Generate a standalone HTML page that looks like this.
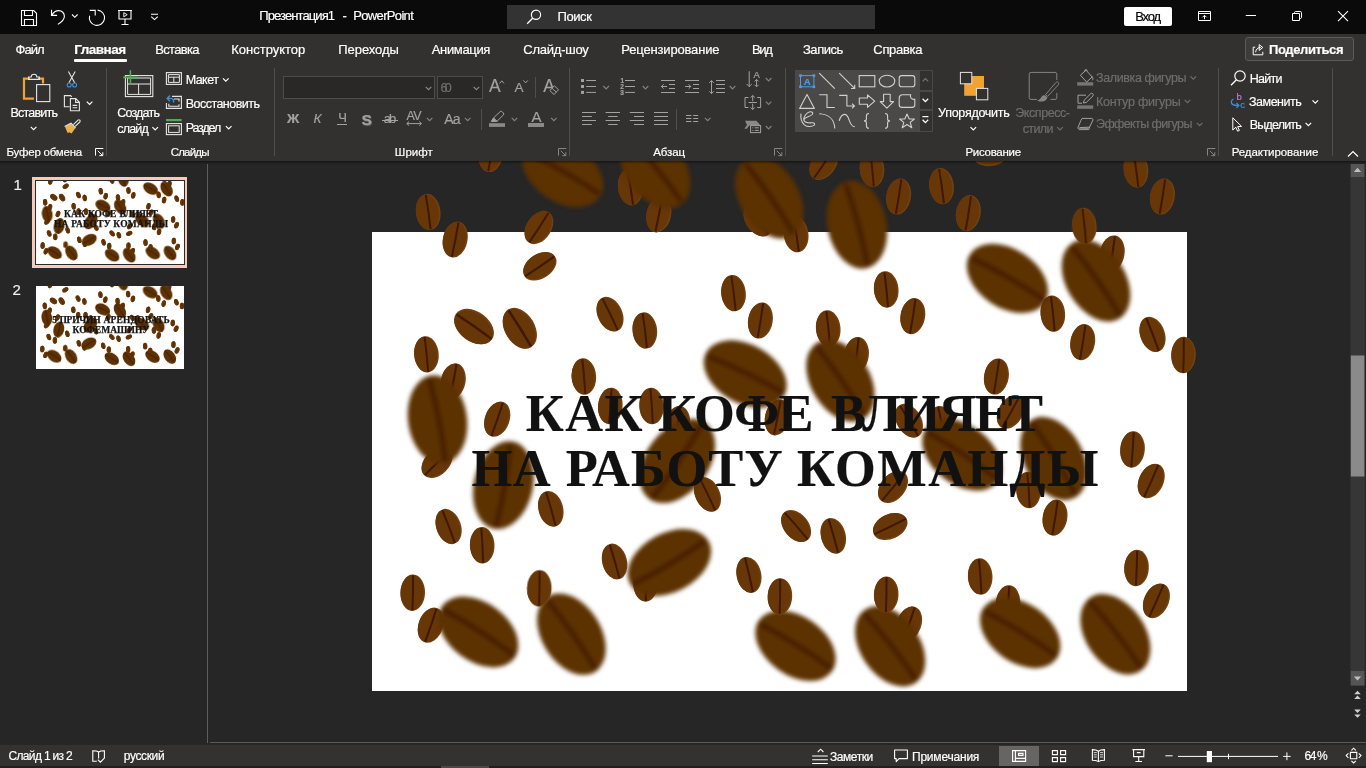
<!DOCTYPE html>
<html lang="ru">
<head>
<meta charset="utf-8">
<title>Презентация1 - PowerPoint</title>
<style>
*{box-sizing:border-box;margin:0;padding:0}
html,body{width:1366px;height:768px;overflow:hidden;background:#262626}
body{position:relative;font-family:"Liberation Sans",sans-serif;color:#fff;font-size:12px}
.abs{position:absolute}
.t{position:absolute;white-space:nowrap;line-height:1;color:#fff;-webkit-text-stroke:.18px currentColor}
.dim{color:#8a8886}
#titlebar{position:absolute;left:0;top:0;width:1366px;height:33.8px;background:#0a0a0a}
#search{position:absolute;left:507px;top:5px;width:368px;height:24px;background:#333333}
#signin{position:absolute;left:1124px;top:7px;width:48px;height:19px;background:#fff;border-radius:2px}
#ribbon{position:absolute;left:0;top:33px;width:1366px;height:127.5px;background:#323130}
#ribshadow{position:absolute;left:0;top:160.5px;width:1366px;height:3.5px;background:linear-gradient(rgba(0,0,0,.5),rgba(0,0,0,.2) 50%,rgba(0,0,0,0))}
#share{position:absolute;left:1245px;top:37px;width:109px;height:24px;background:#3d3c3b;border:1px solid #5c5b5a;border-radius:3px}
#tabline{position:absolute;left:74px;top:59px;width:53px;height:3px;background:#fff;border-radius:1px}
.vsep{position:absolute;width:1px;background:#4f4e4d}
#leftdiv{position:absolute;left:207px;top:164px;width:1px;height:579px;background:#5e5e5e}
#botline{position:absolute;left:210px;top:742px;width:1156px;height:1px;background:#5a5a5a}
#status{position:absolute;left:0;top:745px;width:1366px;height:21px;background:#333231}
#botstrip{position:absolute;left:0;top:766px;width:1366px;height:2px;background:#1f1f1f}
#stage{position:absolute;left:208px;top:161px;width:1140px;height:581px;overflow:hidden}
#slide{position:absolute;left:372px;top:232px;width:814.6px;height:459.4px;background:#fff}
svg{position:absolute;overflow:visible}
</style>
</head>
<body>
<div id="app" style="position:absolute;left:0;top:0;width:1366px;height:768px;will-change:transform">
<!-- stage -->
<div id="slide"></div>
<div id="leftdiv"></div>
<div id="botline"></div>
<div class="abs" style="left:208px;top:160px;width:1142px;height:582px;overflow:hidden"><svg style="left:-208px;top:-160px" width="1366" height="768" viewBox="0 0 1366 768"><defs><filter id="bl" x="-20%" y="-20%" width="140%" height="140%"><feGaussianBlur stdDeviation="1.900"/></filter></defs>
<g>
<g><g transform="translate(491.0 154.0) rotate(10)"><ellipse rx="12.3" ry="18.2" fill="#734110"/><ellipse cx="-0.7" rx="11.4" ry="17.6" fill="#673708"/><path d="M-.3 -17.300Q.5 0 .3 17.500" stroke="#411800" stroke-width="2" fill="none"/></g>
<g transform="translate(428.2 212.0) rotate(-7)"><ellipse rx="12.3" ry="18.2" fill="#734110"/><ellipse cx="-0.7" rx="11.4" ry="17.6" fill="#673708"/><path d="M-.3 -17.300Q.5 0 .3 17.500" stroke="#411800" stroke-width="2" fill="none"/></g>
<g transform="translate(455.2 239.5) rotate(12)"><ellipse rx="12.3" ry="18.2" fill="#734110"/><ellipse cx="-0.7" rx="11.4" ry="17.6" fill="#673708"/><path d="M-.3 -17.300Q.5 0 .3 17.500" stroke="#411800" stroke-width="2" fill="none"/></g>
<g transform="translate(538.9 227.5) rotate(34)"><ellipse rx="12.3" ry="18.2" fill="#734110"/><ellipse cx="-0.7" rx="11.4" ry="17.6" fill="#673708"/><path d="M-.3 -17.300Q.5 0 .3 17.500" stroke="#411800" stroke-width="2" fill="none"/></g>
<g transform="translate(539.8 266.3) rotate(57)"><ellipse rx="12.3" ry="18.2" fill="#734110"/><ellipse cx="-0.7" rx="11.4" ry="17.6" fill="#673708"/><path d="M-.3 -17.300Q.5 0 .3 17.500" stroke="#411800" stroke-width="2" fill="none"/></g>
<g transform="translate(630.3 187.3) rotate(-8)"><ellipse rx="12.3" ry="18.2" fill="#734110"/><ellipse cx="-0.7" rx="11.4" ry="17.6" fill="#673708"/><path d="M-.3 -17.300Q.5 0 .3 17.500" stroke="#411800" stroke-width="2" fill="none"/></g>
<g transform="translate(658.8 214.4) rotate(12)"><ellipse rx="12.3" ry="18.2" fill="#734110"/><ellipse cx="-0.7" rx="11.4" ry="17.6" fill="#673708"/><path d="M-.3 -17.300Q.5 0 .3 17.500" stroke="#411800" stroke-width="2" fill="none"/></g>
<g transform="translate(796.1 234.2) rotate(-8)"><ellipse rx="12.3" ry="18.2" fill="#734110"/><ellipse cx="-0.7" rx="11.4" ry="17.6" fill="#673708"/><path d="M-.3 -17.300Q.5 0 .3 17.500" stroke="#411800" stroke-width="2" fill="none"/></g>
<g transform="translate(758.0 220.0) rotate(-35)"><ellipse rx="12.3" ry="18.2" fill="#734110"/><ellipse cx="-0.7" rx="11.4" ry="17.6" fill="#673708"/><path d="M-.3 -17.300Q.5 0 .3 17.500" stroke="#411800" stroke-width="2" fill="none"/></g>
<g transform="translate(823.8 163.5) rotate(35)"><ellipse rx="12.3" ry="18.2" fill="#734110"/><ellipse cx="-0.7" rx="11.4" ry="17.6" fill="#673708"/><path d="M-.3 -17.300Q.5 0 .3 17.500" stroke="#411800" stroke-width="2" fill="none"/></g>
<g transform="translate(872.0 169.0) rotate(-5)"><ellipse rx="12.3" ry="18.2" fill="#734110"/><ellipse cx="-0.7" rx="11.4" ry="17.6" fill="#673708"/><path d="M-.3 -17.300Q.5 0 .3 17.500" stroke="#411800" stroke-width="2" fill="none"/></g>
<g transform="translate(898.6 196.5) rotate(10)"><ellipse rx="12.3" ry="18.2" fill="#734110"/><ellipse cx="-0.7" rx="11.4" ry="17.6" fill="#673708"/><path d="M-.3 -17.300Q.5 0 .3 17.500" stroke="#411800" stroke-width="2" fill="none"/></g>
<g transform="translate(941.5 186.1) rotate(-7)"><ellipse rx="12.3" ry="18.2" fill="#734110"/><ellipse cx="-0.7" rx="11.4" ry="17.6" fill="#673708"/><path d="M-.3 -17.300Q.5 0 .3 17.500" stroke="#411800" stroke-width="2" fill="none"/></g>
<g transform="translate(968.3 213.1) rotate(10)"><ellipse rx="12.3" ry="18.2" fill="#734110"/><ellipse cx="-0.7" rx="11.4" ry="17.6" fill="#673708"/><path d="M-.3 -17.300Q.5 0 .3 17.500" stroke="#411800" stroke-width="2" fill="none"/></g>
<g transform="translate(991.0 153.7) rotate(80)"><ellipse rx="12.3" ry="18.2" fill="#734110"/><ellipse cx="-0.7" rx="11.4" ry="17.6" fill="#673708"/><path d="M-.3 -17.300Q.5 0 .3 17.500" stroke="#411800" stroke-width="2" fill="none"/></g>
<g transform="translate(1135.9 169.5) rotate(-7)"><ellipse rx="12.3" ry="18.2" fill="#734110"/><ellipse cx="-0.7" rx="11.4" ry="17.6" fill="#673708"/><path d="M-.3 -17.300Q.5 0 .3 17.500" stroke="#411800" stroke-width="2" fill="none"/></g>
<g transform="translate(1162.4 196.5) rotate(10)"><ellipse rx="12.3" ry="18.2" fill="#734110"/><ellipse cx="-0.7" rx="11.4" ry="17.6" fill="#673708"/><path d="M-.3 -17.300Q.5 0 .3 17.500" stroke="#411800" stroke-width="2" fill="none"/></g>
<g transform="translate(1112.2 253.5) rotate(10)"><ellipse rx="12.3" ry="18.2" fill="#734110"/><ellipse cx="-0.7" rx="11.4" ry="17.6" fill="#673708"/><path d="M-.3 -17.300Q.5 0 .3 17.500" stroke="#411800" stroke-width="2" fill="none"/></g>
<g transform="translate(474.0 326.6) rotate(-54) scale(1.215)"><ellipse rx="12.3" ry="18.2" fill="#734110"/><ellipse cx="-0.7" rx="11.4" ry="17.6" fill="#673708"/><path d="M-.3 -17.300Q.5 0 .3 17.500" stroke="#411800" stroke-width="2" fill="none"/></g>
<g transform="translate(519.8 328.3) rotate(-31) scale(1.215)"><ellipse rx="12.3" ry="18.2" fill="#734110"/><ellipse cx="-0.7" rx="11.4" ry="17.6" fill="#673708"/><path d="M-.3 -17.300Q.5 0 .3 17.500" stroke="#411800" stroke-width="2" fill="none"/></g>
<g transform="translate(610.0 314.2) rotate(-25)"><ellipse rx="12.3" ry="18.2" fill="#734110"/><ellipse cx="-0.7" rx="11.4" ry="17.6" fill="#673708"/><path d="M-.3 -17.300Q.5 0 .3 17.500" stroke="#411800" stroke-width="2" fill="none"/></g>
<g transform="translate(644.8 330.5) rotate(-6)"><ellipse rx="12.3" ry="18.2" fill="#734110"/><ellipse cx="-0.7" rx="11.4" ry="17.6" fill="#673708"/><path d="M-.3 -17.300Q.5 0 .3 17.500" stroke="#411800" stroke-width="2" fill="none"/></g>
<g transform="translate(733.5 293.2) rotate(-6)"><ellipse rx="12.3" ry="18.2" fill="#734110"/><ellipse cx="-0.7" rx="11.4" ry="17.6" fill="#673708"/><path d="M-.3 -17.300Q.5 0 .3 17.500" stroke="#411800" stroke-width="2" fill="none"/></g>
<g transform="translate(760.4 320.5) rotate(10)"><ellipse rx="12.3" ry="18.2" fill="#734110"/><ellipse cx="-0.7" rx="11.4" ry="17.6" fill="#673708"/><path d="M-.3 -17.300Q.5 0 .3 17.500" stroke="#411800" stroke-width="2" fill="none"/></g>
<g transform="translate(828.2 328.5) rotate(-5)"><ellipse rx="12.3" ry="18.2" fill="#734110"/><ellipse cx="-0.7" rx="11.4" ry="17.6" fill="#673708"/><path d="M-.3 -17.300Q.5 0 .3 17.500" stroke="#411800" stroke-width="2" fill="none"/></g>
<g transform="translate(886.2 289.5) rotate(-5)"><ellipse rx="12.3" ry="18.2" fill="#734110"/><ellipse cx="-0.7" rx="11.4" ry="17.6" fill="#673708"/><path d="M-.3 -17.300Q.5 0 .3 17.500" stroke="#411800" stroke-width="2" fill="none"/></g>
<g transform="translate(912.8 316.1) rotate(10)"><ellipse rx="12.3" ry="18.2" fill="#734110"/><ellipse cx="-0.7" rx="11.4" ry="17.6" fill="#673708"/><path d="M-.3 -17.300Q.5 0 .3 17.500" stroke="#411800" stroke-width="2" fill="none"/></g>
<g transform="translate(1052.8 313.7) rotate(-5)"><ellipse rx="12.3" ry="18.2" fill="#734110"/><ellipse cx="-0.7" rx="11.4" ry="17.6" fill="#673708"/><path d="M-.3 -17.300Q.5 0 .3 17.500" stroke="#411800" stroke-width="2" fill="none"/></g>
<g transform="translate(1082.7 342.1) rotate(10)"><ellipse rx="12.3" ry="18.2" fill="#734110"/><ellipse cx="-0.7" rx="11.4" ry="17.6" fill="#673708"/><path d="M-.3 -17.300Q.5 0 .3 17.500" stroke="#411800" stroke-width="2" fill="none"/></g>
<g transform="translate(1152.5 334.4) rotate(-20)"><ellipse rx="12.3" ry="18.2" fill="#734110"/><ellipse cx="-0.7" rx="11.4" ry="17.6" fill="#673708"/><path d="M-.3 -17.300Q.5 0 .3 17.500" stroke="#411800" stroke-width="2" fill="none"/></g>
<g transform="translate(1183.5 355.0) rotate(2)"><ellipse rx="12.3" ry="18.2" fill="#734110"/><ellipse cx="-0.7" rx="11.4" ry="17.6" fill="#673708"/><path d="M-.3 -17.300Q.5 0 .3 17.500" stroke="#411800" stroke-width="2" fill="none"/></g>
<g transform="translate(426.4 354.3) rotate(-5)"><ellipse rx="12.3" ry="18.2" fill="#734110"/><ellipse cx="-0.7" rx="11.4" ry="17.6" fill="#673708"/><path d="M-.3 -17.300Q.5 0 .3 17.500" stroke="#411800" stroke-width="2" fill="none"/></g>
<g transform="translate(453.2 381.2) rotate(12)"><ellipse rx="12.3" ry="18.2" fill="#734110"/><ellipse cx="-0.7" rx="11.4" ry="17.6" fill="#673708"/><path d="M-.3 -17.300Q.5 0 .3 17.500" stroke="#411800" stroke-width="2" fill="none"/></g>
<g transform="translate(437.0 462.5) rotate(45)"><ellipse rx="12.3" ry="18.2" fill="#734110"/><ellipse cx="-0.7" rx="11.4" ry="17.6" fill="#673708"/><path d="M-.3 -17.300Q.5 0 .3 17.500" stroke="#411800" stroke-width="2" fill="none"/></g>
<g transform="translate(497.2 419.2) rotate(20)"><ellipse rx="12.3" ry="18.2" fill="#734110"/><ellipse cx="-0.7" rx="11.4" ry="17.6" fill="#673708"/><path d="M-.3 -17.300Q.5 0 .3 17.500" stroke="#411800" stroke-width="2" fill="none"/></g>
<g transform="translate(583.8 376.5) rotate(-4)"><ellipse rx="12.3" ry="18.2" fill="#734110"/><ellipse cx="-0.7" rx="11.4" ry="17.6" fill="#673708"/><path d="M-.3 -17.300Q.5 0 .3 17.500" stroke="#411800" stroke-width="2" fill="none"/></g>
<g transform="translate(610.3 406.0) rotate(5)"><ellipse rx="12.3" ry="18.2" fill="#734110"/><ellipse cx="-0.7" rx="11.4" ry="17.6" fill="#673708"/><path d="M-.3 -17.300Q.5 0 .3 17.500" stroke="#411800" stroke-width="2" fill="none"/></g>
<g transform="translate(651.6 406.0) rotate(-3)"><ellipse rx="12.3" ry="18.2" fill="#734110"/><ellipse cx="-0.7" rx="11.4" ry="17.6" fill="#673708"/><path d="M-.3 -17.300Q.5 0 .3 17.500" stroke="#411800" stroke-width="2" fill="none"/></g>
<g transform="translate(677.6 424.0) rotate(10)"><ellipse rx="12.3" ry="18.2" fill="#734110"/><ellipse cx="-0.7" rx="11.4" ry="17.6" fill="#673708"/><path d="M-.3 -17.300Q.5 0 .3 17.500" stroke="#411800" stroke-width="2" fill="none"/></g>
<g transform="translate(777.3 417.4) rotate(12)"><ellipse rx="12.3" ry="18.2" fill="#734110"/><ellipse cx="-0.7" rx="11.4" ry="17.6" fill="#673708"/><path d="M-.3 -17.300Q.5 0 .3 17.500" stroke="#411800" stroke-width="2" fill="none"/></g>
<g transform="translate(856.5 355.0) rotate(8)"><ellipse rx="12.3" ry="18.2" fill="#734110"/><ellipse cx="-0.7" rx="11.4" ry="17.6" fill="#673708"/><path d="M-.3 -17.300Q.5 0 .3 17.500" stroke="#411800" stroke-width="2" fill="none"/></g>
<g transform="translate(909.0 420.7) rotate(-30)"><ellipse rx="12.3" ry="18.2" fill="#734110"/><ellipse cx="-0.7" rx="11.4" ry="17.6" fill="#673708"/><path d="M-.3 -17.300Q.5 0 .3 17.500" stroke="#411800" stroke-width="2" fill="none"/></g>
<g transform="translate(941.5 424.0) rotate(-10)"><ellipse rx="12.3" ry="18.2" fill="#734110"/><ellipse cx="-0.7" rx="11.4" ry="17.6" fill="#673708"/><path d="M-.3 -17.300Q.5 0 .3 17.500" stroke="#411800" stroke-width="2" fill="none"/></g>
<g transform="translate(996.4 376.5) rotate(10)"><ellipse rx="12.3" ry="18.2" fill="#734110"/><ellipse cx="-0.7" rx="11.4" ry="17.6" fill="#673708"/><path d="M-.3 -17.300Q.5 0 .3 17.500" stroke="#411800" stroke-width="2" fill="none"/></g>
<g transform="translate(1010.8 411.9) rotate(30)"><ellipse rx="12.3" ry="18.2" fill="#734110"/><ellipse cx="-0.7" rx="11.4" ry="17.6" fill="#673708"/><path d="M-.3 -17.300Q.5 0 .3 17.500" stroke="#411800" stroke-width="2" fill="none"/></g>
<g transform="translate(1132.5 449.5) rotate(5)"><ellipse rx="12.3" ry="18.2" fill="#734110"/><ellipse cx="-0.7" rx="11.4" ry="17.6" fill="#673708"/><path d="M-.3 -17.300Q.5 0 .3 17.500" stroke="#411800" stroke-width="2" fill="none"/></g>
<g transform="translate(1151.2 481.0) rotate(25)"><ellipse rx="12.3" ry="18.2" fill="#734110"/><ellipse cx="-0.7" rx="11.4" ry="17.6" fill="#673708"/><path d="M-.3 -17.300Q.5 0 .3 17.500" stroke="#411800" stroke-width="2" fill="none"/></g>
<g transform="translate(1028.5 490.0) rotate(-3)"><ellipse rx="12.3" ry="18.2" fill="#734110"/><ellipse cx="-0.7" rx="11.4" ry="17.6" fill="#673708"/><path d="M-.3 -17.300Q.5 0 .3 17.500" stroke="#411800" stroke-width="2" fill="none"/></g>
<g transform="translate(1055.0 517.6) rotate(10)"><ellipse rx="12.3" ry="18.2" fill="#734110"/><ellipse cx="-0.7" rx="11.4" ry="17.6" fill="#673708"/><path d="M-.3 -17.300Q.5 0 .3 17.500" stroke="#411800" stroke-width="2" fill="none"/></g>
<g transform="translate(893.0 487.0) rotate(40)"><ellipse rx="12.3" ry="18.2" fill="#734110"/><ellipse cx="-0.7" rx="11.4" ry="17.6" fill="#673708"/><path d="M-.3 -17.300Q.5 0 .3 17.500" stroke="#411800" stroke-width="2" fill="none"/></g>
<g transform="translate(550.8 508.8) rotate(-15)"><ellipse rx="12.3" ry="18.2" fill="#734110"/><ellipse cx="-0.7" rx="11.4" ry="17.6" fill="#673708"/><path d="M-.3 -17.300Q.5 0 .3 17.500" stroke="#411800" stroke-width="2" fill="none"/></g>
<g transform="translate(448.6 526.5) rotate(-20)"><ellipse rx="12.3" ry="18.2" fill="#734110"/><ellipse cx="-0.7" rx="11.4" ry="17.6" fill="#673708"/><path d="M-.3 -17.300Q.5 0 .3 17.500" stroke="#411800" stroke-width="2" fill="none"/></g>
<g transform="translate(482.2 545.3) rotate(-2)"><ellipse rx="12.3" ry="18.2" fill="#734110"/><ellipse cx="-0.7" rx="11.4" ry="17.6" fill="#673708"/><path d="M-.3 -17.300Q.5 0 .3 17.500" stroke="#411800" stroke-width="2" fill="none"/></g>
<g transform="translate(707.5 494.4) rotate(-25)"><ellipse rx="12.3" ry="18.2" fill="#734110"/><ellipse cx="-0.7" rx="11.4" ry="17.6" fill="#673708"/><path d="M-.3 -17.300Q.5 0 .3 17.500" stroke="#411800" stroke-width="2" fill="none"/></g>
<g transform="translate(796.1 526.0) rotate(-40)"><ellipse rx="12.3" ry="18.2" fill="#734110"/><ellipse cx="-0.7" rx="11.4" ry="17.6" fill="#673708"/><path d="M-.3 -17.300Q.5 0 .3 17.500" stroke="#411800" stroke-width="2" fill="none"/></g>
<g transform="translate(833.3 535.8) rotate(-15)"><ellipse rx="12.3" ry="18.2" fill="#734110"/><ellipse cx="-0.7" rx="11.4" ry="17.6" fill="#673708"/><path d="M-.3 -17.300Q.5 0 .3 17.500" stroke="#411800" stroke-width="2" fill="none"/></g>
<g transform="translate(890.2 526.5) rotate(65)"><ellipse rx="12.3" ry="18.2" fill="#734110"/><ellipse cx="-0.7" rx="11.4" ry="17.6" fill="#673708"/><path d="M-.3 -17.300Q.5 0 .3 17.500" stroke="#411800" stroke-width="2" fill="none"/></g>
<g transform="translate(412.7 592.7) rotate(2)"><ellipse rx="12.3" ry="18.2" fill="#734110"/><ellipse cx="-0.7" rx="11.4" ry="17.6" fill="#673708"/><path d="M-.3 -17.300Q.5 0 .3 17.500" stroke="#411800" stroke-width="2" fill="none"/></g>
<g transform="translate(430.8 625.2) rotate(20)"><ellipse rx="12.3" ry="18.2" fill="#734110"/><ellipse cx="-0.7" rx="11.4" ry="17.6" fill="#673708"/><path d="M-.3 -17.300Q.5 0 .3 17.500" stroke="#411800" stroke-width="2" fill="none"/></g>
<g transform="translate(614.6 561.5) rotate(-15)"><ellipse rx="12.3" ry="18.2" fill="#734110"/><ellipse cx="-0.7" rx="11.4" ry="17.6" fill="#673708"/><path d="M-.3 -17.300Q.5 0 .3 17.500" stroke="#411800" stroke-width="2" fill="none"/></g>
<g transform="translate(645.6 583.5) rotate(0)"><ellipse rx="12.3" ry="18.2" fill="#734110"/><ellipse cx="-0.7" rx="11.4" ry="17.6" fill="#673708"/><path d="M-.3 -17.300Q.5 0 .3 17.500" stroke="#411800" stroke-width="2" fill="none"/></g>
<g transform="translate(748.9 574.9) rotate(-12)"><ellipse rx="12.3" ry="18.2" fill="#734110"/><ellipse cx="-0.7" rx="11.4" ry="17.6" fill="#673708"/><path d="M-.3 -17.300Q.5 0 .3 17.500" stroke="#411800" stroke-width="2" fill="none"/></g>
<g transform="translate(909.0 624.0) rotate(20)"><ellipse rx="12.3" ry="18.2" fill="#734110"/><ellipse cx="-0.7" rx="11.4" ry="17.6" fill="#673708"/><path d="M-.3 -17.300Q.5 0 .3 17.500" stroke="#411800" stroke-width="2" fill="none"/></g>
<g transform="translate(980.2 576.5) rotate(-3)"><ellipse rx="12.3" ry="18.2" fill="#734110"/><ellipse cx="-0.7" rx="11.4" ry="17.6" fill="#673708"/><path d="M-.3 -17.300Q.5 0 .3 17.500" stroke="#411800" stroke-width="2" fill="none"/></g>
<g transform="translate(1008.0 603.5) rotate(5)"><ellipse rx="12.3" ry="18.2" fill="#734110"/><ellipse cx="-0.7" rx="11.4" ry="17.6" fill="#673708"/><path d="M-.3 -17.300Q.5 0 .3 17.500" stroke="#411800" stroke-width="2" fill="none"/></g>
<g transform="translate(1136.5 568.0) rotate(3)"><ellipse rx="12.3" ry="18.2" fill="#734110"/><ellipse cx="-0.7" rx="11.4" ry="17.6" fill="#673708"/><path d="M-.3 -17.300Q.5 0 .3 17.500" stroke="#411800" stroke-width="2" fill="none"/></g>
<g transform="translate(1156.4 600.8) rotate(25)"><ellipse rx="12.3" ry="18.2" fill="#734110"/><ellipse cx="-0.7" rx="11.4" ry="17.6" fill="#673708"/><path d="M-.3 -17.300Q.5 0 .3 17.500" stroke="#411800" stroke-width="2" fill="none"/></g></g>
<g filter="url(#bl)"><g transform="translate(562.6 172.5) rotate(-57)"><ellipse rx="29.500" ry="44.500" fill="#5c3000"/><path d="M-2.500 -41.500Q3 0 2 42.500" stroke="#451d00" stroke-width="4.600" fill="none"/></g>
<g transform="translate(655.0 168.5) rotate(-36)"><ellipse rx="29.500" ry="44.500" fill="#5c3000"/><path d="M-2.500 -41.500Q3 0 2 42.500" stroke="#451d00" stroke-width="4.600" fill="none"/></g>
<g transform="translate(769.2 197.6) rotate(-31.5)"><ellipse rx="29.500" ry="44.500" fill="#5c3000"/><path d="M-2.500 -41.500Q3 0 2 42.500" stroke="#451d00" stroke-width="4.600" fill="none"/></g>
<g transform="translate(856.9 224.7) rotate(-12)"><ellipse rx="29.500" ry="44.500" fill="#5c3000"/><path d="M-2.500 -41.500Q3 0 2 42.500" stroke="#451d00" stroke-width="4.600" fill="none"/></g>
<g transform="translate(1007.4 278.4) rotate(-57)"><ellipse rx="29.500" ry="44.500" fill="#5c3000"/><path d="M-2.500 -41.500Q3 0 2 42.500" stroke="#451d00" stroke-width="4.600" fill="none"/></g>
<g transform="translate(1096.0 280.7) rotate(-32)"><ellipse rx="29.500" ry="44.500" fill="#5c3000"/><path d="M-2.500 -41.500Q3 0 2 42.500" stroke="#451d00" stroke-width="4.600" fill="none"/></g>
<g transform="translate(437.5 419.6) rotate(-8)"><ellipse rx="29.500" ry="44.500" fill="#5c3000"/><path d="M-2.500 -41.500Q3 0 2 42.500" stroke="#451d00" stroke-width="4.600" fill="none"/></g>
<g transform="translate(745.2 374.0) rotate(-61)"><ellipse rx="29.500" ry="44.500" fill="#5c3000"/><path d="M-2.500 -41.500Q3 0 2 42.500" stroke="#451d00" stroke-width="4.600" fill="none"/></g>
<g transform="translate(840.4 380.7) rotate(-31.5)"><ellipse rx="29.500" ry="44.500" fill="#5c3000"/><path d="M-2.500 -41.500Q3 0 2 42.500" stroke="#451d00" stroke-width="4.600" fill="none"/></g>
<g transform="translate(503.4 485.2) rotate(13)"><ellipse rx="29.500" ry="44.500" fill="#5c3000"/><path d="M-2.500 -41.500Q3 0 2 42.500" stroke="#451d00" stroke-width="4.600" fill="none"/></g>
<g transform="translate(677.4 461.0) rotate(37) scale(1.06)"><ellipse rx="29.500" ry="44.500" fill="#5c3000"/><path d="M-2.500 -41.500Q3 0 2 42.500" stroke="#451d00" stroke-width="4.600" fill="none"/></g>
<g transform="translate(961.9 454.9) rotate(-53)"><ellipse rx="29.500" ry="44.500" fill="#5c3000"/><path d="M-2.500 -41.500Q3 0 2 42.500" stroke="#451d00" stroke-width="4.600" fill="none"/></g>
<g transform="translate(1053.7 458.5) rotate(-28)"><ellipse rx="29.500" ry="44.500" fill="#5c3000"/><path d="M-2.500 -41.500Q3 0 2 42.500" stroke="#451d00" stroke-width="4.600" fill="none"/></g>
<g transform="translate(669.4 562.5) rotate(62)"><ellipse rx="29.500" ry="44.500" fill="#5c3000"/><path d="M-2.500 -41.500Q3 0 2 42.500" stroke="#451d00" stroke-width="4.600" fill="none"/></g>
<g transform="translate(478.4 632.0) rotate(-54)"><ellipse rx="29.500" ry="44.500" fill="#5c3000"/><path d="M-2.500 -41.500Q3 0 2 42.500" stroke="#451d00" stroke-width="4.600" fill="none"/></g>
<g transform="translate(571.4 634.2) rotate(-32)"><ellipse rx="29.500" ry="44.500" fill="#5c3000"/><path d="M-2.500 -41.500Q3 0 2 42.500" stroke="#451d00" stroke-width="4.600" fill="none"/></g>
<g transform="translate(795.5 645.8) rotate(-55)"><ellipse rx="29.500" ry="44.500" fill="#5c3000"/><path d="M-2.500 -41.500Q3 0 2 42.500" stroke="#451d00" stroke-width="4.600" fill="none"/></g>
<g transform="translate(890.2 646.3) rotate(-35)"><ellipse rx="29.500" ry="44.500" fill="#5c3000"/><path d="M-2.500 -41.500Q3 0 2 42.500" stroke="#451d00" stroke-width="4.600" fill="none"/></g>
<g transform="translate(1020.2 633.0) rotate(-55)"><ellipse rx="29.500" ry="44.500" fill="#5c3000"/><path d="M-2.500 -41.500Q3 0 2 42.500" stroke="#451d00" stroke-width="4.600" fill="none"/></g>
<g transform="translate(1115.4 634.2) rotate(-34.6)"><ellipse rx="29.500" ry="44.500" fill="#5c3000"/><path d="M-2.500 -41.500Q3 0 2 42.500" stroke="#451d00" stroke-width="4.600" fill="none"/></g></g>
<g><g transform="translate(1084.3 226.0) rotate(-5)"><ellipse rx="12.3" ry="18.2" fill="#734110"/><ellipse cx="-0.7" rx="11.4" ry="17.6" fill="#673708"/><path d="M-.3 -17.300Q.5 0 .3 17.500" stroke="#411800" stroke-width="2" fill="none"/></g>
<g transform="translate(539.3 588.4) rotate(2)"><ellipse rx="12.3" ry="18.2" fill="#734110"/><ellipse cx="-0.7" rx="11.4" ry="17.6" fill="#673708"/><path d="M-.3 -17.300Q.5 0 .3 17.500" stroke="#411800" stroke-width="2" fill="none"/></g>
<g transform="translate(779.9 596.4) rotate(2)"><ellipse rx="12.3" ry="18.2" fill="#734110"/><ellipse cx="-0.7" rx="11.4" ry="17.6" fill="#673708"/><path d="M-.3 -17.300Q.5 0 .3 17.500" stroke="#411800" stroke-width="2" fill="none"/></g>
<g transform="translate(886.2 594.6) rotate(2)"><ellipse rx="12.3" ry="18.2" fill="#734110"/><ellipse cx="-0.7" rx="11.4" ry="17.6" fill="#673708"/><path d="M-.3 -17.300Q.5 0 .3 17.500" stroke="#411800" stroke-width="2" fill="none"/></g></g>
</g>
</svg></div>
<span class="t" style="left:525.70px;top:384px;line-height:58px;font-size:52.4px;letter-spacing:1.475px;color:#111;font-weight:bold;font-family:'Liberation Serif',serif;">КАК</span>
<span class="t" style="left:658.10px;top:384px;line-height:58px;font-size:52.4px;letter-spacing:-0.900px;color:#111;font-weight:bold;font-family:'Liberation Serif',serif;">КОФЕ</span>
<span class="t" style="left:830.90px;top:384px;line-height:58px;font-size:52.4px;letter-spacing:-1.695px;color:#111;font-weight:bold;font-family:'Liberation Serif',serif;">ВЛИЯЕТ</span>
<span class="t" style="left:471.60px;top:439px;line-height:58px;font-size:52.4px;letter-spacing:0.438px;color:#111;font-weight:bold;font-family:'Liberation Serif',serif;">НА</span>
<span class="t" style="left:565.70px;top:439px;line-height:58px;font-size:52.4px;letter-spacing:1.100px;color:#111;font-weight:bold;font-family:'Liberation Serif',serif;">РАБОТУ</span>
<span class="t" style="left:797.00px;top:439px;line-height:58px;font-size:52.4px;letter-spacing:1.421px;color:#111;font-weight:bold;font-family:'Liberation Serif',serif;">КОМАНДЫ</span>
<!-- chrome -->
<div id="ribbon"></div>
<div id="ribshadow"></div>
<div id="share"></div>
<div id="tabline"></div>
<div id="titlebar"></div>
<div id="search"></div>
<div id="signin"></div>
<span class="t" style="left:259.30px;top:8px;line-height:15px;font-size:13px;letter-spacing:-0.914px;">Презентация1</span>
<span class="t" style="left:342.50px;top:8px;line-height:15px;font-size:13px;letter-spacing:0.000px;">-</span>
<span class="t" style="left:353.30px;top:8px;line-height:15px;font-size:13px;letter-spacing:-0.667px;">PowerPoint</span>
<span class="t" style="left:557.50px;top:9px;line-height:15px;font-size:13px;letter-spacing:-0.406px;">Поиск</span>
<span class="t" style="left:1135.30px;top:9px;line-height:15px;font-size:13px;letter-spacing:-1.246px;color:#000;">Вход</span>
<span class="t" style="left:15.50px;top:42px;line-height:15px;font-size:13px;letter-spacing:-0.979px;">Файл</span>
<span class="t" style="left:74.30px;top:42px;line-height:15px;font-size:13.5px;letter-spacing:-0.529px;font-weight:bold;">Главная</span>
<span class="t" style="left:155.30px;top:42px;line-height:15px;font-size:13px;letter-spacing:-0.685px;">Вставка</span>
<span class="t" style="left:231.30px;top:42px;line-height:15px;font-size:13px;letter-spacing:-0.013px;">Конструктор</span>
<span class="t" style="left:338.30px;top:42px;line-height:15px;font-size:13px;letter-spacing:-0.071px;">Переходы</span>
<span class="t" style="left:431.80px;top:42px;line-height:15px;font-size:13px;letter-spacing:-0.357px;">Анимация</span>
<span class="t" style="left:523.30px;top:42px;line-height:15px;font-size:13px;letter-spacing:-0.234px;">Слайд-шоу</span>
<span class="t" style="left:621.30px;top:42px;line-height:15px;font-size:13px;letter-spacing:-0.167px;">Рецензирование</span>
<span class="t" style="left:752.00px;top:42px;line-height:15px;font-size:13px;letter-spacing:-1.350px;">Вид</span>
<span class="t" style="left:803.00px;top:42px;line-height:15px;font-size:13px;letter-spacing:-0.478px;">Запись</span>
<span class="t" style="left:873.30px;top:42px;line-height:15px;font-size:13px;letter-spacing:-0.300px;">Справка</span>
<span class="t" style="left:1269.00px;top:42px;line-height:15px;font-size:13px;letter-spacing:-0.389px;font-weight:bold;">Поделиться</span>
<svg style="left:20px;top:9px" width="18" height="18" viewBox="0 0 18 18"><path d="M1.5 1.5h12.2l2.8 2.8v12.2h-15z M4.5 1.5v5h8v-5 M4.5 16.5v-6h9v6" stroke="#fff" fill="none" stroke-width="1.1"/></svg>
<svg style="left:50px;top:8px" width="18" height="18" viewBox="0 0 18 18"><path d="M1.5 1.8v5.6h5.6 M1.8 7.2c1.6-3 4-4.6 7-4.6a5.6 5.6 0 0 1 5.6 5.6c0 3.6-3 6-6.6 8.2" stroke="#fff" fill="none" stroke-width="1.1"/></svg>
<svg style="left:71px;top:13px" width="8" height="6" viewBox="0 0 8 6"><path d="M1 1.5l2.8 2.8l2.8-2.8" stroke="#fff" fill="none" stroke-width="1.1"/></svg>
<svg style="left:88px;top:8px" width="18" height="19" viewBox="0 0 18 19"><path d="M1.8 2.4h5.400v5.200 M9.600 2.150a7.600 7.600 0 1 1-8 5.600" stroke="#fff" fill="none" stroke-width="1.1"/></svg>
<svg style="left:117px;top:9px" width="16" height="17" viewBox="0 0 16 17"><path d="M1 1.5h14 M2 1.5v8.5h12v-8.5 M8 10v5.5 M4.5 15.5h7" stroke="#fff" fill="none" stroke-width="1.1"/><path d="M6.800 3.600l3.400 2.100l-3.400 2.100z" stroke="#fff" stroke-width=".9" fill="none"/></svg>
<svg style="left:150px;top:13px" width="9" height="8" viewBox="0 0 9 8"><path d="M1 1.2h7 M1.2 3.6l3.3 3l3.3-3" stroke="#fff" fill="none" stroke-width="1.1"/></svg>
<svg style="left:526px;top:9px" width="16" height="16" viewBox="0 0 16 16"><circle cx="10" cy="5.8" r="4.6" stroke="#fff" fill="none" stroke-width="1.2"/><path d="M6.6 9.2l-5.4 5.6" stroke="#fff" fill="none" stroke-width="1.3"/></svg>
<svg style="left:1197px;top:10px" width="15" height="12" viewBox="0 0 15 12"><path d="M1.500 1.500h12v9h-12z M1.500 3.500h12 M7.500 9.200v-3.600 M5.500 7.300l2-2l2 2" stroke="#fff" fill="none" stroke-width="1"/></svg>
<svg style="left:1245px;top:15px" width="12" height="2" viewBox="0 0 12 2"><path d="M0.800 .500h10.200" stroke="#fff" fill="none" stroke-width="1"/></svg>
<svg style="left:1291px;top:10px" width="12" height="12" viewBox="0 0 12 12"><path d="M1.500 3.500h7v7h-7z M3.500 3.300v-.6a1.200 1.200 0 0 1 1.200-1.200h4.600a1.200 1.200 0 0 1 1.200 1.200v4.600a1.200 1.200 0 0 1-1.200 1.200h-.6" stroke="#fff" fill="none" stroke-width="1"/></svg>
<svg style="left:1337px;top:10px" width="12" height="12" viewBox="0 0 12 12"><path d="M1 1.200l10 10 M11 1.200l-10 10" stroke="#fff" fill="none" stroke-width="1.100"/></svg>
<svg style="left:1252px;top:43px" width="13" height="13" viewBox="0 0 13 13"><path d="M3.2 4.2h-2v7.6h9.6v-3 M3.6 9.2c.4-3 2.2-4.8 5.2-4.8 M7.2 1.6l3.6 2.9l-3.6 2.9z" stroke="#fff" fill="none" stroke-width="1"/></svg>
<!-- ribbon -->
<div class="vsep" style="left:106px;top:68px;height:88px;background:#4f4e4d"></div>
<div class="vsep" style="left:274px;top:68px;height:88px;background:#4f4e4d"></div>
<div class="vsep" style="left:569px;top:68px;height:88px;background:#4f4e4d"></div>
<div class="vsep" style="left:785px;top:68px;height:88px;background:#4f4e4d"></div>
<div class="vsep" style="left:1218px;top:68px;height:88px;background:#4f4e4d"></div>
<div class="vsep" style="left:1332px;top:68px;height:88px;background:#4f4e4d"></div>
<div class="vsep" style="left:535px;top:77px;height:21px;background:#4f4e4d"></div>
<div class="vsep" style="left:481px;top:109px;height:21px;background:#4f4e4d"></div>
<div class="vsep" style="left:676px;top:109px;height:21px;background:#4f4e4d"></div>
<span class="t" style="left:6.50px;top:146px;line-height:12px;font-size:11.5px;letter-spacing:-0.217px;">Буфер обмена</span>
<span class="t" style="left:170.70px;top:146px;line-height:12px;font-size:11.5px;letter-spacing:-0.802px;">Слайды</span>
<span class="t" style="left:394.80px;top:146px;line-height:12px;font-size:11.5px;letter-spacing:0.047px;">Шрифт</span>
<span class="t" style="left:653.20px;top:146px;line-height:12px;font-size:11.5px;letter-spacing:-0.113px;">Абзац</span>
<span class="t" style="left:965.40px;top:146px;line-height:12px;font-size:11.5px;letter-spacing:-0.280px;">Рисование</span>
<span class="t" style="left:1231.70px;top:146px;line-height:12px;font-size:11.5px;letter-spacing:-0.071px;">Редактирование</span>
<svg style="left:95px;top:148px" width="9" height="9" viewBox="0 0 9 9"><path d="M0.5 7.600v-7.100h7.800 M2.800 2.800l4.800 4.800 M4.400 7.600h3.400v-3.400" stroke="#fff" stroke-width="1" fill="none"/></svg>
<svg style="left:558px;top:148px" width="9" height="9" viewBox="0 0 9 9"><path d="M0.5 7.600v-7.100h7.800 M2.800 2.800l4.800 4.800 M4.400 7.600h3.400v-3.400" stroke="#858483" stroke-width="1" fill="none"/></svg>
<svg style="left:774px;top:148px" width="9" height="9" viewBox="0 0 9 9"><path d="M0.5 7.600v-7.100h7.800 M2.800 2.800l4.800 4.800 M4.400 7.600h3.400v-3.400" stroke="#858483" stroke-width="1" fill="none"/></svg>
<svg style="left:1207px;top:148px" width="9" height="9" viewBox="0 0 9 9"><path d="M0.5 7.600v-7.100h7.800 M2.800 2.800l4.800 4.800 M4.400 7.600h3.400v-3.400" stroke="#858483" stroke-width="1" fill="none"/></svg>
<svg style="left:1347px;top:150px" width="12" height="8" viewBox="0 0 12 8"><path d="M1 6.5l5-5l5 5" stroke="#fff" stroke-width="1.2" fill="none"/></svg>
<span class="t" style="left:10.40px;top:106px;line-height:14px;font-size:12.5px;letter-spacing:-0.771px;">Вставить</span>
<svg style="left:0;top:0" width="1" height="1"><path d="M30.80 126.80l2.80 2.80l2.80 -2.80" stroke="#fff" stroke-width="1.2" fill="none"/></svg>
<svg style="left:0;top:0" width="1" height="1"><path d="M86.80 101.60l2.80 2.80l2.80 -2.80" stroke="#fff" stroke-width="1.2" fill="none"/></svg>
<span class="t" style="left:117.20px;top:106px;line-height:14px;font-size:12.5px;letter-spacing:-0.800px;">Создать</span>
<span class="t" style="left:117.20px;top:122px;line-height:14px;font-size:12.5px;letter-spacing:-0.787px;">слайд</span>
<svg style="left:0;top:0" width="1" height="1"><path d="M152.40 127.20l2.80 2.80l2.80 -2.80" stroke="#fff" stroke-width="1.2" fill="none"/></svg>
<span class="t" style="left:185.70px;top:73px;line-height:14px;font-size:12.5px;letter-spacing:-0.544px;">Макет</span>
<svg style="left:0;top:0" width="1" height="1"><path d="M223.00 78.30l2.80 2.80l2.80 -2.80" stroke="#fff" stroke-width="1.2" fill="none"/></svg>
<span class="t" style="left:185.70px;top:97px;line-height:14px;font-size:12.5px;letter-spacing:-0.524px;">Восстановить</span>
<span class="t" style="left:185.70px;top:121px;line-height:14px;font-size:12.5px;letter-spacing:-1.163px;">Раздел</span>
<svg style="left:0;top:0" width="1" height="1"><path d="M225.90 126.10l2.80 2.80l2.80 -2.80" stroke="#fff" stroke-width="1.2" fill="none"/></svg>
<div class="abs" style="left:283px;top:76px;width:152px;height:23px;background:#292827;border:1px solid #4d4c4b"></div>
<div class="abs" style="left:437px;top:76px;width:46px;height:23px;background:#292827;border:1px solid #4d4c4b"></div>
<svg style="left:0;top:0" width="1" height="1"><path d="M425.70 86.80l2.80 2.80l2.80 -2.80" stroke="#8a8988" stroke-width="1.2" fill="none"/></svg>
<svg style="left:0;top:0" width="1" height="1"><path d="M473.60 86.80l2.80 2.80l2.80 -2.80" stroke="#8a8988" stroke-width="1.2" fill="none"/></svg>
<span class="t" style="left:440.40px;top:81px;line-height:14px;font-size:12.5px;letter-spacing:-2.475px;color:#6f6e6d;">60</span>
<span class="t" style="left:488.90px;top:76px;line-height:20px;font-size:17.5px;letter-spacing:0.000px;color:#a3a2a1;">A</span>
<svg style="left:0;top:0" width="1" height="1"><path d="M499.6 83.4l2.2-2.6l2.2 2.6" stroke="#a3a2a1" stroke-width="1" fill="none"/></svg>
<span class="t" style="left:514.50px;top:80px;line-height:15px;font-size:13.5px;letter-spacing:0.000px;color:#a3a2a1;">A</span>
<svg style="left:0;top:0" width="1" height="1"><path d="M523.4 80.4l2.2 2.5l2.2-2.5" stroke="#a3a2a1" stroke-width="1" fill="none"/></svg>
<span class="t" style="left:543.20px;top:76px;line-height:20px;font-size:17.5px;letter-spacing:0.000px;color:#a3a2a1;">A</span>
<svg style="left:0;top:0" width="1" height="1"><path d="M549.9 90.6l4.4-4.8l4.2 3.9l-4.4 4.8z" stroke="#a3a2a1" stroke-width="1" fill="#323130"/><path d="M552 88.2l4.2 3.9" stroke="#a3a2a1" stroke-width="1"/></svg>
<span class="t" style="left:287.06px;top:111px;line-height:15px;font-size:13.5px;letter-spacing:0.000px;color:#a3a2a1;font-weight:bold;">Ж</span>
<span class="t" style="left:313.60px;top:111px;line-height:15px;font-size:13.5px;letter-spacing:0.000px;color:#a3a2a1;font-style:italic;">К</span>
<span class="t" style="left:338.20px;top:110px;line-height:15px;font-size:13px;letter-spacing:0.000px;color:#a3a2a1;">Ч</span>
<div class="abs" style="left:337px;top:124px;width:10px;height:1px;background:#a3a2a1"></div>
<span class="t" style="left:361.60px;top:111px;line-height:17px;font-size:15.5px;letter-spacing:0.000px;color:#a3a2a1;font-weight:bold;text-shadow:.6px .8px .8px #6a6a6a;">S</span>
<span class="t" style="left:383.70px;top:111px;line-height:15px;font-size:13px;letter-spacing:-2.037px;color:#a3a2a1;">ab</span>
<div class="abs" style="left:382px;top:120px;width:16px;height:1px;background:#a3a2a1"></div>
<span class="t" style="left:406.50px;top:109px;line-height:14px;font-size:12.5px;letter-spacing:-0.550px;color:#a3a2a1;">AV</span>
<svg style="left:0;top:0" width="1" height="1"><path d="M406.8 123.6h14.6 M409 121.6l-2.2 2l2.2 2 M419.2 121.6l2.2 2l-2.2 2" stroke="#a3a2a1" stroke-width="1" fill="none"/></svg>
<svg style="left:0;top:0" width="1" height="1"><path d="M426.80 117.90l2.80 2.80l2.80 -2.80" stroke="#828180" stroke-width="1.2" fill="none"/></svg>
<span class="t" style="left:444.30px;top:111px;line-height:16px;font-size:14px;letter-spacing:-0.825px;color:#a3a2a1;">Aa</span>
<svg style="left:0;top:0" width="1" height="1"><path d="M464.90 117.90l2.80 2.80l2.80 -2.80" stroke="#828180" stroke-width="1.2" fill="none"/></svg>
<svg style="left:0;top:0" width="1" height="1"><rect x="489" y="123.2" width="16" height="3.7" fill="#8a8988"/><path d="M492.6 121.6l-1.2-.2l2.2-3.6l6.6-6.2a1.5 1.5 0 0 1 2 .1l1.2 1.3a1.5 1.5 0 0 1 0 2l-6.4 6.2z M493.6 117.8l3.6 3.6" stroke="#a3a2a1" stroke-width="1" fill="none"/><path d="M490.8 121.8l2.6-4l3.6 3.6z" fill="#a3a2a1"/></svg>
<svg style="left:0;top:0" width="1" height="1"><path d="M511.70 117.90l2.80 2.80l2.80 -2.80" stroke="#828180" stroke-width="1.2" fill="none"/></svg>
<span class="t" style="left:531.40px;top:108px;line-height:17px;font-size:15px;letter-spacing:0.000px;color:#a3a2a1;">A</span>
<div class="abs" style="left:528px;top:123.2px;width:16px;height:3.7px;background:#8a8988"></div>
<svg style="left:0;top:0" width="1" height="1"><path d="M551.10 117.90l2.80 2.80l2.80 -2.80" stroke="#828180" stroke-width="1.2" fill="none"/></svg>
<svg style="left:0;top:0" width="1" height="1"><rect x="581" y="79.0" width="3" height="3" fill="#a3a2a1"/><path d="M586.2 80.5h9.8" stroke="#a3a2a1" stroke-width="1" fill="none"/><rect x="581" y="85.0" width="3" height="3" fill="#a3a2a1"/><path d="M586.2 86.5h9.8" stroke="#a3a2a1" stroke-width="1" fill="none"/><rect x="581" y="90.9" width="3" height="3" fill="#a3a2a1"/><path d="M586.2 92.4h9.8" stroke="#a3a2a1" stroke-width="1" fill="none"/><path d="M625 80.5h10" stroke="#a3a2a1" stroke-width="1" fill="none"/><path d="M625 86.5h10" stroke="#a3a2a1" stroke-width="1" fill="none"/><path d="M625 92.4h10" stroke="#a3a2a1" stroke-width="1" fill="none"/><path d="M661 80.5h14 M669 84.5h6 M669 88.5h6 M661 92.5h14 M661.4 86.5h5.6 M663.6 84.3l-2.2 2.2l2.2 2.2" stroke="#a3a2a1" stroke-width="1" fill="none"/><path d="M685 80.5h14 M693 84.5h6 M693 88.5h6 M685 92.5h14 M685.2 86.5h5.6 M688.6 84.3l2.2 2.2l-2.2 2.2" stroke="#a3a2a1" stroke-width="1" fill="none"/><path d="M716 80.5h9 M716 84.5h9 M716 88.5h9 M716 92.5h9 M711.5 80.6v13 M709.3 82.8l2.2-2.2l2.2 2.2 M709.3 91.4l2.2 2.2l2.2-2.2" stroke="#a3a2a1" stroke-width="1" fill="none"/><path d="M582.0 112.5H596.0 M582.0 116.5H591.8 M582.0 120.5H596.0 M582.0 124.5H591.8" stroke="#a3a2a1" stroke-width="1" fill="none"/><path d="M605.6 112.5H620.0 M608.2 116.5H617.6 M605.6 120.5H620.0 M608.2 124.5H617.6" stroke="#a3a2a1" stroke-width="1" fill="none"/><path d="M629.8 112.5H644.0 M634.0 116.5H644.0 M629.8 120.5H644.0 M634.0 124.5H644.0" stroke="#a3a2a1" stroke-width="1" fill="none"/><path d="M654.0 112.5H668.0 M654.0 116.5H668.0 M654.0 120.5H668.0 M654.0 124.5H668.0" stroke="#a3a2a1" stroke-width="1" fill="none"/><path d="M686 115.5h5.4 M686 118.5h5.4 M686 121.5h5.4 M693.2 115.5h5 M693.2 118.5h5 M693.2 121.5h5" stroke="#a3a2a1" stroke-width="1" fill="none"/><path d="M749.2 71.2v15.4 M746.6 84l2.6 2.6l2.6-2.6 M756.6 79.6v7 M754.6 81.4l2-2l2 2 M754.6 84.8l2 2l2-2" stroke="#a3a2a1" stroke-width="1" fill="none"/><path d="M748.4 97.5h-3.4v10h3.4 M757.2 97.5h3.4v10h-3.4 M752.7 95.6v5.6 M750.6 97.6l2.1-2.1l2.1 2.1 M752.7 103.8v5.6 M750.6 107.4l2.1 2.1l2.1-2.1 M748.6 102.5h8.2" stroke="#a3a2a1" stroke-width="1" fill="none"/><path d="M745 120.8h11.4l4.2 4.6h-11.4l-2.2 3.4h-2.6l2.6-3.8z" fill="#8a8988"/><rect x="750.6" y="125.6" width="10" height="7" fill="#323130" stroke="#a3a2a1" stroke-width="1"/><path d="M752.4 127.8h1 M752.4 130.4h1 M754.8 127.8h4 M754.8 130.4h4" stroke="#a3a2a1" stroke-width="1" fill="none"/></svg>
<span class="t" style="left:620.60px;top:77px;line-height:7px;font-size:6.5px;letter-spacing:0.000px;color:#a3a2a1;font-weight:bold;">1</span>
<span class="t" style="left:620.20px;top:83px;line-height:7px;font-size:6.5px;letter-spacing:0.000px;color:#a3a2a1;font-weight:bold;">2</span>
<span class="t" style="left:620.20px;top:89px;line-height:7px;font-size:6.5px;letter-spacing:0.000px;color:#a3a2a1;font-weight:bold;">3</span>
<span class="t" style="left:753.40px;top:69px;line-height:11px;font-size:9.5px;letter-spacing:0.000px;color:#a3a2a1;">A</span>
<svg style="left:0;top:0" width="1" height="1"><path d="M603.30 86.00l2.80 2.80l2.80 -2.80" stroke="#828180" stroke-width="1.2" fill="none"/></svg>
<svg style="left:0;top:0" width="1" height="1"><path d="M642.70 86.00l2.80 2.80l2.80 -2.80" stroke="#828180" stroke-width="1.2" fill="none"/></svg>
<svg style="left:0;top:0" width="1" height="1"><path d="M729.70 86.00l2.80 2.80l2.80 -2.80" stroke="#828180" stroke-width="1.2" fill="none"/></svg>
<svg style="left:0;top:0" width="1" height="1"><path d="M704.90 117.90l2.80 2.80l2.80 -2.80" stroke="#828180" stroke-width="1.2" fill="none"/></svg>
<svg style="left:0;top:0" width="1" height="1"><path d="M765.80 78.00l2.80 2.80l2.80 -2.80" stroke="#828180" stroke-width="1.2" fill="none"/></svg>
<svg style="left:0;top:0" width="1" height="1"><path d="M765.80 101.60l2.80 2.80l2.80 -2.80" stroke="#828180" stroke-width="1.2" fill="none"/></svg>
<svg style="left:0;top:0" width="1" height="1"><path d="M765.80 126.00l2.80 2.80l2.80 -2.80" stroke="#828180" stroke-width="1.2" fill="none"/></svg>
<div class="abs" style="left:795px;top:70px;width:138px;height:62px;background:#4a4948"></div>
<div class="abs" style="left:920px;top:71px;width:12px;height:19px;background:#323130"></div>
<div class="abs" style="left:920px;top:92px;width:12px;height:17px;background:#323130"></div>
<div class="abs" style="left:920px;top:111px;width:12px;height:20px;background:#323130"></div>
<svg style="left:0;top:0" width="1" height="1"><rect x="800.5" y="75.6" width="13.4" height="11.2" stroke="#4a9de8" stroke-width="1" fill="none"/><rect x="799.2" y="74.3" width="2.6" height="2.6" fill="#4a9de8"/><rect x="812.6" y="74.3" width="2.6" height="2.6" fill="#4a9de8"/><rect x="799.2" y="85.5" width="2.6" height="2.6" fill="#4a9de8"/><rect x="812.6" y="85.5" width="2.6" height="2.6" fill="#4a9de8"/><path d="M819.2 73.2l15.6 15.4" stroke="#d2d0ce" stroke-width="1.1" fill="none"/><path d="M839.2 73.2l15.4 15.2 M851 88.5h3.7v-3.7" stroke="#d2d0ce" stroke-width="1.1" fill="none"/><rect x="859.2" y="75.6" width="15.6" height="11.2" stroke="#d2d0ce" stroke-width="1.1" fill="none"/><ellipse cx="887" cy="81.1" rx="7.8" ry="5.9" stroke="#d2d0ce" stroke-width="1.1" fill="none"/><rect x="899.2" y="75.6" width="15.6" height="11.2" rx="2.6" stroke="#d2d0ce" stroke-width="1.1" fill="none"/><path d="M807 94.4l7.4 14h-14.8z" stroke="#d2d0ce" stroke-width="1.1" fill="none" stroke-linejoin="round"/><path d="M819.2 94.7h7.8v12.8h7.8" stroke="#d2d0ce" stroke-width="1.1" fill="none"/><path d="M839.2 95.4h7.7v10.6h7.6 M852 103.6l2.5 2.4l-2.5 2.4" stroke="#d2d0ce" stroke-width="1.1" fill="none"/><path d="M859.3 98h8.2v-3.2l7.2 6.3l-7.2 6.3v-3.2h-8.2z" stroke="#d2d0ce" stroke-width="1.1" fill="none" stroke-linejoin="round"/><path d="M883.6 94.2h6.6v7.4h3.4l-6.7 6.6l-6.7-6.6h3.4z" stroke="#d2d0ce" stroke-width="1.1" fill="none" stroke-linejoin="round"/><path d="M902 94.8h8.6a3.4 3.4 0 0 0 3.4 4.6l.8 0v5.4a2.6 2.6 0 0 1-2.6 2.6h-10.4a2.6 2.6 0 0 1-2.6-2.6v-6.6a3.4 3.4 0 0 1 2.8-3.4z" stroke="#d2d0ce" stroke-width="1.1" fill="none"/><path d="M801 113.6c-.6 4 .6 8.600 3.400 11.200c3.200 2.800 8 1.600 9.600.6c1.400-1 .2-2.600-1.200-2.600c-3 0-8 .6-8.800-2.400c-.8-3.200 6.400-3.400 8.400-6.200c1-1.600-.6-2.800-2.400-2.400c-3.600.8-6.600 5-6.200 8.600" stroke="#d2d0ce" stroke-width="1.1" fill="none"/><path d="M819.2 113.8c9.200.4 15.200 5.600 15.600 14.600" stroke="#d2d0ce" stroke-width="1.1" fill="none"/><path d="M839.200 120.800c1.200-4.200 3.600-6.600 5.800-6.400c5 .6 3.400 12 9.800 12.400" stroke="#d2d0ce" stroke-width="1.1" fill="none"/><path d="M869 113.500c-2.400 0-2.600.8-2.600 2.600v2.800c0 1.400-.8 2-2.400 2c1.600 0 2.400.6 2.400 2v2.800c0 1.800.2 2.600 2.600 2.600" stroke="#d2d0ce" stroke-width="1.1" fill="none"/><path d="M885 113.500c2.400 0 2.600.8 2.600 2.600v2.800c0 1.400.8 2 2.400 2c-1.600 0-2.400.6-2.400 2v2.800c0 1.800-.2 2.600-2.600 2.600" stroke="#d2d0ce" stroke-width="1.1" fill="none"/><path d="M907 114l2.200 5h5.200l-4.200 3.400l1.600 5.400l-4.800-3.300l-4.800 3.300l1.600-5.400l-4.200-3.400h5.200z" stroke="#d2d0ce" stroke-width="1.1" fill="none" stroke-linejoin="round"/><path d="M922.600 81.400l2.800-2.800l2.800 2.800" stroke="#777675" stroke-width="1.1" fill="none"/><path d="M922.600 98.800l2.800 2.800l2.800-2.800" stroke="#fff" stroke-width="1.3" fill="none"/><path d="M922.400 116.600h6 M922.600 119.800l2.800 2.800l2.800-2.800" stroke="#fff" stroke-width="1.3" fill="none"/><rect x="964.200" y="76" width="19.800" height="19.800" fill="#f0a332"/><rect x="960.400" y="72.400" width="11.400" height="11.400" fill="#323130" stroke="#e6e4e2" stroke-width="1"/><rect x="976.400" y="88.400" width="11.400" height="11.400" fill="#323130" stroke="#e6e4e2" stroke-width="1"/><path d="M1050.600 99.400h4.400a1.800 1.800 0 0 0 1.800-1.800v-4.600 M1056.800 80v-5.800a1.800 1.800 0 0 0-1.800-1.800h-24a1.800 1.800 0 0 0-1.800 1.800v23.400a1.800 1.800 0 0 0 1.800 1.800h6" stroke="#858483" stroke-width="1" fill="none"/><path d="M1058.200 82.400c.8.800.6 1.800-.2 2.800l-10.400 11.200l-2-1.800l10-11.800c.8-1 1.800-1.200 2.600-.4z" stroke="#858483" stroke-width="1" fill="none"/><path d="M1045 95.200l2.400 2.200c-.4 2.200-2.800 4.200-5.600 4.200c-1.800 0-3.600-.4-4.600-1.200c2.400-.4 3.400-2 4.200-3.400c.8-1.400 2-2 3.600-1.800z" fill="#858483"/><rect x="1077.200" y="82.200" width="16" height="3.400" fill="#777675"/><path d="M1080.400 75.200l5.600-5l6.200 6.800l-5.600 5z M1084.600 71.600c-.6-2.200 2.200-2.800 2.800-.8 M1091.600 76.200c1.400 1.200 1.800 2.800.8 4" stroke="#a3a2a1" stroke-width="1" fill="none"/><rect x="1077.200" y="105.400" width="16" height="3.400" fill="#777675"/><path d="M1086 95.200h-8v8h4" stroke="#a3a2a1" stroke-width="1" fill="none"/><path d="M1083.400 103l.8-2.800l6.600-6.600a1.300 1.300 0 0 1 1.800 0l.4.400a1.300 1.300 0 0 1 0 1.800l-6.600 6.600z" stroke="#a3a2a1" stroke-width="1" fill="none"/><path d="M1082 118.400h9.800l1.400 1.200l-3.400 7l-1 3h-9.600l-1.400-1.600l3-7.400z M1079.400 127.600l9.600-.4l.8-.6" stroke="#a3a2a1" stroke-width="1" fill="none"/><path d="M1078.800 128.200l9.800-.2l-.6 1.600h-8.400z" fill="#8a8988"/></svg>
<span class="t" style="left:803.80px;top:76px;line-height:11px;font-size:9.5px;letter-spacing:0.000px;color:#4a9de8;font-weight:bold;">A</span>
<span class="t" style="left:938.10px;top:106px;line-height:14px;font-size:12.5px;letter-spacing:-0.277px;">Упорядочить</span>
<svg style="left:0;top:0" width="1" height="1"><path d="M970.50 127.10l2.80 2.80l2.80 -2.80" stroke="#fff" stroke-width="1.2" fill="none"/></svg>
<span class="t" style="left:1015.30px;top:106px;line-height:14px;font-size:12.5px;letter-spacing:-0.436px;color:#6f6e6d;">Экспресс-</span>
<span class="t" style="left:1022.70px;top:122px;line-height:14px;font-size:12.5px;letter-spacing:-0.637px;color:#6f6e6d;">стили</span>
<svg style="left:0;top:0" width="1" height="1"><path d="M1057.20 127.10l2.80 2.80l2.80 -2.80" stroke="#6f6e6d" stroke-width="1.2" fill="none"/></svg>
<span class="t" style="left:1096.00px;top:71px;line-height:14px;font-size:12.5px;letter-spacing:-0.380px;color:#6f6e6d;">Заливка фигуры</span>
<svg style="left:0;top:0" width="1" height="1"><path d="M1190.50 76.30l2.80 2.80l2.80 -2.80" stroke="#6f6e6d" stroke-width="1.2" fill="none"/></svg>
<span class="t" style="left:1096.00px;top:95px;line-height:14px;font-size:12.5px;letter-spacing:-0.228px;color:#6f6e6d;">Контур фигуры</span>
<svg style="left:0;top:0" width="1" height="1"><path d="M1184.70 99.80l2.80 2.80l2.80 -2.80" stroke="#6f6e6d" stroke-width="1.2" fill="none"/></svg>
<span class="t" style="left:1096.00px;top:117px;line-height:14px;font-size:12.5px;letter-spacing:-0.599px;color:#6f6e6d;">Эффекты фигуры</span>
<svg style="left:0;top:0" width="1" height="1"><path d="M1196.80 122.80l2.80 2.80l2.80 -2.80" stroke="#6f6e6d" stroke-width="1.2" fill="none"/></svg>
<span class="t" style="left:1249.70px;top:72px;line-height:14px;font-size:12.5px;letter-spacing:-0.722px;">Найти</span>
<span class="t" style="left:1249.00px;top:95px;line-height:14px;font-size:12.5px;letter-spacing:-0.484px;">Заменить</span>
<svg style="left:0;top:0" width="1" height="1"><path d="M1312.50 100.40l2.80 2.80l2.80 -2.80" stroke="#fff" stroke-width="1.2" fill="none"/></svg>
<span class="t" style="left:1249.70px;top:118px;line-height:14px;font-size:12.5px;letter-spacing:-0.798px;">Выделить</span>
<svg style="left:0;top:0" width="1" height="1"><path d="M1305.60 122.80l2.80 2.80l2.80 -2.80" stroke="#fff" stroke-width="1.2" fill="none"/></svg>
<svg style="left:0;top:0" width="1" height="1"><path d="M30 78.600h-6v20h10" stroke="#f0a332" stroke-width="2.200" fill="none"/><path d="M38 78.600h5v5" stroke="#f0a332" stroke-width="2.200" fill="none"/><path d="M28.600 79.400v-2.400h2.600a2.800 2.800 0 0 1 5.600 0h2.600v2.400z" stroke="#e8e6e4" stroke-width="1.1" fill="none"/><rect x="36.600" y="84.600" width="13.200" height="17" fill="#323130" stroke="#e8e6e4" stroke-width="1.100"/><path d="M68.400 71.400l6.400 11.600 M75.200 71.400l-6.400 11.600" stroke="#e8e6e4" stroke-width="1.1" fill="none"/><circle cx="69.200" cy="85" r="2" stroke="#3f8fd8" stroke-width="1.100" fill="none"/><circle cx="74.600" cy="85" r="2" stroke="#3f8fd8" stroke-width="1.100" fill="none"/><path d="M69.600 106.800h-5.200v-11.200h6.200l1.200 1.200" stroke="#e8e6e4" stroke-width="1.1" fill="none"/><path d="M70.400 98.600h5.400l3.600 3.600v8.600h-9z M75.600 98.800v3.600h3.600 M72.600 105.400h4.600 M72.600 107.800h4.600" stroke="#e8e6e4" stroke-width="1.1" fill="none"/><path d="M73.400 124.600l4.600-4.400a1.300 1.300 0 0 1 1.800 0a1.300 1.300 0 0 1 0 1.800l-4.600 4.400" stroke="#e8e6e4" stroke-width="1.1" fill="none"/><path d="M65 126.800l5.800-3.200l4.400 4.600l-3.600 5.400l-2.400-1.400l-1.400 1l-1.200-2.400z" fill="#eab04e"/><path d="M64.600 126.600l6.400-3.400l4.600 4.800" stroke="#e8e6e4" stroke-width="1.100" fill="none"/><rect x="125.400" y="75.600" width="27.400" height="21" stroke="#e8e6e4" stroke-width="1.1" fill="none"/><path d="M127.600 78h23v16.400h-23z M127.600 84h23 M138.600 84v10.400" stroke="#e8e6e4" stroke-width="1" fill="none"/><path d="M123.200 77.400h14.400 M130.400 70.200v14.400" stroke="#4caf50" stroke-width="1.600" fill="none"/><rect x="166.400" y="72.600" width="15" height="11.800" stroke="#e8e6e4" stroke-width="1.1" fill="none"/><path d="M168.400 74.600h11v7.800h-11z M168.400 77.200h11 M173.800 77.200v5.200" stroke="#e8e6e4" stroke-width="1" fill="none"/><path d="M172 96.400h9.400v12h-15v-5.400 M174 99h5v2.400 M168.800 103.800v2.400h10.200v-2" stroke="#e8e6e4" stroke-width="1.1" fill="none"/><path d="M170 95.600l-2.800 2.800l2.800 2.800 M167.400 98.400h3.400c1.800 0 2.800 1.200 2.800 3v1" stroke="#3f8fd8" stroke-width="1.400" fill="none"/><rect x="166" y="119" width="15.600" height="2.200" fill="#4caf50"/><rect x="166.400" y="123.600" width="15" height="11" stroke="#e8e6e4" stroke-width="1.1" fill="none"/><rect x="168.600" y="125.800" width="10.600" height="6.600" stroke="#e8e6e4" stroke-width="1" fill="none"/><circle cx="1240" cy="76" r="5.200" stroke="#fff" stroke-width="1.200" fill="none"/><path d="M1236.400 79.800l-5.400 5.400" stroke="#fff" stroke-width="1.300" fill="none"/><path d="M1233.400 99.200c-2 .8-2.600 2.800-1.600 4.400c.8 1.400 2.200 1.800 5 1.800h2 M1236.400 103l2.400 2.400l-2.400 2.400" stroke="#3f8fd8" stroke-width="1.300" fill="none"/><path d="M1232.800 117.800v12.200l3-2.800l1.800 4l1.800-.8l-1.800-3.800l4-.2z" stroke="#fff" stroke-width="1" fill="none" stroke-linejoin="round"/></svg>
<span class="t" style="left:1236.60px;top:91px;line-height:11px;font-size:9.5px;letter-spacing:0.000px;color:#c878c8;">b</span>
<span class="t" style="left:1240.20px;top:99px;line-height:11px;font-size:9.5px;letter-spacing:0.000px;color:#3f8fd8;">c</span>
<!-- leftpanel -->
<span class="t" style="left:13.40px;top:176px;line-height:17px;font-size:15px;letter-spacing:0.000px;color:#f0f0f0;">1</span>
<span class="t" style="left:12.60px;top:281px;line-height:17px;font-size:15px;letter-spacing:0.000px;color:#f0f0f0;">2</span>
<div class="abs" style="left:32px;top:176.500px;width:155.400px;height:91.800px;background:#f8cbb9"></div>
<div class="abs" style="left:35px;top:180px;width:149.500px;height:85px;background:#2b2b2b"></div>
<div class="abs" style="left:36px;top:181px;width:148px;height:83px;background:#fff"></div>
<svg style="left:36px;top:181px;overflow:hidden" width="148" height="83" viewBox="377 237 814 458"><g>
<g><g transform="translate(491.0 154.0) rotate(10)"><ellipse rx="12.3" ry="18.2" fill="#734110"/><ellipse cx="-0.7" rx="11.4" ry="17.6" fill="#673708"/><path d="M-.3 -17.300Q.5 0 .3 17.500" stroke="#411800" stroke-width="2" fill="none"/></g>
<g transform="translate(428.2 212.0) rotate(-7)"><ellipse rx="12.3" ry="18.2" fill="#734110"/><ellipse cx="-0.7" rx="11.4" ry="17.6" fill="#673708"/><path d="M-.3 -17.300Q.5 0 .3 17.500" stroke="#411800" stroke-width="2" fill="none"/></g>
<g transform="translate(455.2 239.5) rotate(12)"><ellipse rx="12.3" ry="18.2" fill="#734110"/><ellipse cx="-0.7" rx="11.4" ry="17.6" fill="#673708"/><path d="M-.3 -17.300Q.5 0 .3 17.500" stroke="#411800" stroke-width="2" fill="none"/></g>
<g transform="translate(538.9 227.5) rotate(34)"><ellipse rx="12.3" ry="18.2" fill="#734110"/><ellipse cx="-0.7" rx="11.4" ry="17.6" fill="#673708"/><path d="M-.3 -17.300Q.5 0 .3 17.500" stroke="#411800" stroke-width="2" fill="none"/></g>
<g transform="translate(539.8 266.3) rotate(57)"><ellipse rx="12.3" ry="18.2" fill="#734110"/><ellipse cx="-0.7" rx="11.4" ry="17.6" fill="#673708"/><path d="M-.3 -17.300Q.5 0 .3 17.500" stroke="#411800" stroke-width="2" fill="none"/></g>
<g transform="translate(630.3 187.3) rotate(-8)"><ellipse rx="12.3" ry="18.2" fill="#734110"/><ellipse cx="-0.7" rx="11.4" ry="17.6" fill="#673708"/><path d="M-.3 -17.300Q.5 0 .3 17.500" stroke="#411800" stroke-width="2" fill="none"/></g>
<g transform="translate(658.8 214.4) rotate(12)"><ellipse rx="12.3" ry="18.2" fill="#734110"/><ellipse cx="-0.7" rx="11.4" ry="17.6" fill="#673708"/><path d="M-.3 -17.300Q.5 0 .3 17.500" stroke="#411800" stroke-width="2" fill="none"/></g>
<g transform="translate(796.1 234.2) rotate(-8)"><ellipse rx="12.3" ry="18.2" fill="#734110"/><ellipse cx="-0.7" rx="11.4" ry="17.6" fill="#673708"/><path d="M-.3 -17.300Q.5 0 .3 17.500" stroke="#411800" stroke-width="2" fill="none"/></g>
<g transform="translate(758.0 220.0) rotate(-35)"><ellipse rx="12.3" ry="18.2" fill="#734110"/><ellipse cx="-0.7" rx="11.4" ry="17.6" fill="#673708"/><path d="M-.3 -17.300Q.5 0 .3 17.500" stroke="#411800" stroke-width="2" fill="none"/></g>
<g transform="translate(823.8 163.5) rotate(35)"><ellipse rx="12.3" ry="18.2" fill="#734110"/><ellipse cx="-0.7" rx="11.4" ry="17.6" fill="#673708"/><path d="M-.3 -17.300Q.5 0 .3 17.500" stroke="#411800" stroke-width="2" fill="none"/></g>
<g transform="translate(872.0 169.0) rotate(-5)"><ellipse rx="12.3" ry="18.2" fill="#734110"/><ellipse cx="-0.7" rx="11.4" ry="17.6" fill="#673708"/><path d="M-.3 -17.300Q.5 0 .3 17.500" stroke="#411800" stroke-width="2" fill="none"/></g>
<g transform="translate(898.6 196.5) rotate(10)"><ellipse rx="12.3" ry="18.2" fill="#734110"/><ellipse cx="-0.7" rx="11.4" ry="17.6" fill="#673708"/><path d="M-.3 -17.300Q.5 0 .3 17.500" stroke="#411800" stroke-width="2" fill="none"/></g>
<g transform="translate(941.5 186.1) rotate(-7)"><ellipse rx="12.3" ry="18.2" fill="#734110"/><ellipse cx="-0.7" rx="11.4" ry="17.6" fill="#673708"/><path d="M-.3 -17.300Q.5 0 .3 17.500" stroke="#411800" stroke-width="2" fill="none"/></g>
<g transform="translate(968.3 213.1) rotate(10)"><ellipse rx="12.3" ry="18.2" fill="#734110"/><ellipse cx="-0.7" rx="11.4" ry="17.6" fill="#673708"/><path d="M-.3 -17.300Q.5 0 .3 17.500" stroke="#411800" stroke-width="2" fill="none"/></g>
<g transform="translate(991.0 153.7) rotate(80)"><ellipse rx="12.3" ry="18.2" fill="#734110"/><ellipse cx="-0.7" rx="11.4" ry="17.6" fill="#673708"/><path d="M-.3 -17.300Q.5 0 .3 17.500" stroke="#411800" stroke-width="2" fill="none"/></g>
<g transform="translate(1135.9 169.5) rotate(-7)"><ellipse rx="12.3" ry="18.2" fill="#734110"/><ellipse cx="-0.7" rx="11.4" ry="17.6" fill="#673708"/><path d="M-.3 -17.300Q.5 0 .3 17.500" stroke="#411800" stroke-width="2" fill="none"/></g>
<g transform="translate(1162.4 196.5) rotate(10)"><ellipse rx="12.3" ry="18.2" fill="#734110"/><ellipse cx="-0.7" rx="11.4" ry="17.6" fill="#673708"/><path d="M-.3 -17.300Q.5 0 .3 17.500" stroke="#411800" stroke-width="2" fill="none"/></g>
<g transform="translate(1112.2 253.5) rotate(10)"><ellipse rx="12.3" ry="18.2" fill="#734110"/><ellipse cx="-0.7" rx="11.4" ry="17.6" fill="#673708"/><path d="M-.3 -17.300Q.5 0 .3 17.500" stroke="#411800" stroke-width="2" fill="none"/></g>
<g transform="translate(474.0 326.6) rotate(-54) scale(1.215)"><ellipse rx="12.3" ry="18.2" fill="#734110"/><ellipse cx="-0.7" rx="11.4" ry="17.6" fill="#673708"/><path d="M-.3 -17.300Q.5 0 .3 17.500" stroke="#411800" stroke-width="2" fill="none"/></g>
<g transform="translate(519.8 328.3) rotate(-31) scale(1.215)"><ellipse rx="12.3" ry="18.2" fill="#734110"/><ellipse cx="-0.7" rx="11.4" ry="17.6" fill="#673708"/><path d="M-.3 -17.300Q.5 0 .3 17.500" stroke="#411800" stroke-width="2" fill="none"/></g>
<g transform="translate(610.0 314.2) rotate(-25)"><ellipse rx="12.3" ry="18.2" fill="#734110"/><ellipse cx="-0.7" rx="11.4" ry="17.6" fill="#673708"/><path d="M-.3 -17.300Q.5 0 .3 17.500" stroke="#411800" stroke-width="2" fill="none"/></g>
<g transform="translate(644.8 330.5) rotate(-6)"><ellipse rx="12.3" ry="18.2" fill="#734110"/><ellipse cx="-0.7" rx="11.4" ry="17.6" fill="#673708"/><path d="M-.3 -17.300Q.5 0 .3 17.500" stroke="#411800" stroke-width="2" fill="none"/></g>
<g transform="translate(733.5 293.2) rotate(-6)"><ellipse rx="12.3" ry="18.2" fill="#734110"/><ellipse cx="-0.7" rx="11.4" ry="17.6" fill="#673708"/><path d="M-.3 -17.300Q.5 0 .3 17.500" stroke="#411800" stroke-width="2" fill="none"/></g>
<g transform="translate(760.4 320.5) rotate(10)"><ellipse rx="12.3" ry="18.2" fill="#734110"/><ellipse cx="-0.7" rx="11.4" ry="17.6" fill="#673708"/><path d="M-.3 -17.300Q.5 0 .3 17.500" stroke="#411800" stroke-width="2" fill="none"/></g>
<g transform="translate(828.2 328.5) rotate(-5)"><ellipse rx="12.3" ry="18.2" fill="#734110"/><ellipse cx="-0.7" rx="11.4" ry="17.6" fill="#673708"/><path d="M-.3 -17.300Q.5 0 .3 17.500" stroke="#411800" stroke-width="2" fill="none"/></g>
<g transform="translate(886.2 289.5) rotate(-5)"><ellipse rx="12.3" ry="18.2" fill="#734110"/><ellipse cx="-0.7" rx="11.4" ry="17.6" fill="#673708"/><path d="M-.3 -17.300Q.5 0 .3 17.500" stroke="#411800" stroke-width="2" fill="none"/></g>
<g transform="translate(912.8 316.1) rotate(10)"><ellipse rx="12.3" ry="18.2" fill="#734110"/><ellipse cx="-0.7" rx="11.4" ry="17.6" fill="#673708"/><path d="M-.3 -17.300Q.5 0 .3 17.500" stroke="#411800" stroke-width="2" fill="none"/></g>
<g transform="translate(1052.8 313.7) rotate(-5)"><ellipse rx="12.3" ry="18.2" fill="#734110"/><ellipse cx="-0.7" rx="11.4" ry="17.6" fill="#673708"/><path d="M-.3 -17.300Q.5 0 .3 17.500" stroke="#411800" stroke-width="2" fill="none"/></g>
<g transform="translate(1082.7 342.1) rotate(10)"><ellipse rx="12.3" ry="18.2" fill="#734110"/><ellipse cx="-0.7" rx="11.4" ry="17.6" fill="#673708"/><path d="M-.3 -17.300Q.5 0 .3 17.500" stroke="#411800" stroke-width="2" fill="none"/></g>
<g transform="translate(1152.5 334.4) rotate(-20)"><ellipse rx="12.3" ry="18.2" fill="#734110"/><ellipse cx="-0.7" rx="11.4" ry="17.6" fill="#673708"/><path d="M-.3 -17.300Q.5 0 .3 17.500" stroke="#411800" stroke-width="2" fill="none"/></g>
<g transform="translate(1183.5 355.0) rotate(2)"><ellipse rx="12.3" ry="18.2" fill="#734110"/><ellipse cx="-0.7" rx="11.4" ry="17.6" fill="#673708"/><path d="M-.3 -17.300Q.5 0 .3 17.500" stroke="#411800" stroke-width="2" fill="none"/></g>
<g transform="translate(426.4 354.3) rotate(-5)"><ellipse rx="12.3" ry="18.2" fill="#734110"/><ellipse cx="-0.7" rx="11.4" ry="17.6" fill="#673708"/><path d="M-.3 -17.300Q.5 0 .3 17.500" stroke="#411800" stroke-width="2" fill="none"/></g>
<g transform="translate(453.2 381.2) rotate(12)"><ellipse rx="12.3" ry="18.2" fill="#734110"/><ellipse cx="-0.7" rx="11.4" ry="17.6" fill="#673708"/><path d="M-.3 -17.300Q.5 0 .3 17.500" stroke="#411800" stroke-width="2" fill="none"/></g>
<g transform="translate(437.0 462.5) rotate(45)"><ellipse rx="12.3" ry="18.2" fill="#734110"/><ellipse cx="-0.7" rx="11.4" ry="17.6" fill="#673708"/><path d="M-.3 -17.300Q.5 0 .3 17.500" stroke="#411800" stroke-width="2" fill="none"/></g>
<g transform="translate(497.2 419.2) rotate(20)"><ellipse rx="12.3" ry="18.2" fill="#734110"/><ellipse cx="-0.7" rx="11.4" ry="17.6" fill="#673708"/><path d="M-.3 -17.300Q.5 0 .3 17.500" stroke="#411800" stroke-width="2" fill="none"/></g>
<g transform="translate(583.8 376.5) rotate(-4)"><ellipse rx="12.3" ry="18.2" fill="#734110"/><ellipse cx="-0.7" rx="11.4" ry="17.6" fill="#673708"/><path d="M-.3 -17.300Q.5 0 .3 17.500" stroke="#411800" stroke-width="2" fill="none"/></g>
<g transform="translate(610.3 406.0) rotate(5)"><ellipse rx="12.3" ry="18.2" fill="#734110"/><ellipse cx="-0.7" rx="11.4" ry="17.6" fill="#673708"/><path d="M-.3 -17.300Q.5 0 .3 17.500" stroke="#411800" stroke-width="2" fill="none"/></g>
<g transform="translate(651.6 406.0) rotate(-3)"><ellipse rx="12.3" ry="18.2" fill="#734110"/><ellipse cx="-0.7" rx="11.4" ry="17.6" fill="#673708"/><path d="M-.3 -17.300Q.5 0 .3 17.500" stroke="#411800" stroke-width="2" fill="none"/></g>
<g transform="translate(677.6 424.0) rotate(10)"><ellipse rx="12.3" ry="18.2" fill="#734110"/><ellipse cx="-0.7" rx="11.4" ry="17.6" fill="#673708"/><path d="M-.3 -17.300Q.5 0 .3 17.500" stroke="#411800" stroke-width="2" fill="none"/></g>
<g transform="translate(777.3 417.4) rotate(12)"><ellipse rx="12.3" ry="18.2" fill="#734110"/><ellipse cx="-0.7" rx="11.4" ry="17.6" fill="#673708"/><path d="M-.3 -17.300Q.5 0 .3 17.500" stroke="#411800" stroke-width="2" fill="none"/></g>
<g transform="translate(856.5 355.0) rotate(8)"><ellipse rx="12.3" ry="18.2" fill="#734110"/><ellipse cx="-0.7" rx="11.4" ry="17.6" fill="#673708"/><path d="M-.3 -17.300Q.5 0 .3 17.500" stroke="#411800" stroke-width="2" fill="none"/></g>
<g transform="translate(909.0 420.7) rotate(-30)"><ellipse rx="12.3" ry="18.2" fill="#734110"/><ellipse cx="-0.7" rx="11.4" ry="17.6" fill="#673708"/><path d="M-.3 -17.300Q.5 0 .3 17.500" stroke="#411800" stroke-width="2" fill="none"/></g>
<g transform="translate(941.5 424.0) rotate(-10)"><ellipse rx="12.3" ry="18.2" fill="#734110"/><ellipse cx="-0.7" rx="11.4" ry="17.6" fill="#673708"/><path d="M-.3 -17.300Q.5 0 .3 17.500" stroke="#411800" stroke-width="2" fill="none"/></g>
<g transform="translate(996.4 376.5) rotate(10)"><ellipse rx="12.3" ry="18.2" fill="#734110"/><ellipse cx="-0.7" rx="11.4" ry="17.6" fill="#673708"/><path d="M-.3 -17.300Q.5 0 .3 17.500" stroke="#411800" stroke-width="2" fill="none"/></g>
<g transform="translate(1010.8 411.9) rotate(30)"><ellipse rx="12.3" ry="18.2" fill="#734110"/><ellipse cx="-0.7" rx="11.4" ry="17.6" fill="#673708"/><path d="M-.3 -17.300Q.5 0 .3 17.500" stroke="#411800" stroke-width="2" fill="none"/></g>
<g transform="translate(1132.5 449.5) rotate(5)"><ellipse rx="12.3" ry="18.2" fill="#734110"/><ellipse cx="-0.7" rx="11.4" ry="17.6" fill="#673708"/><path d="M-.3 -17.300Q.5 0 .3 17.500" stroke="#411800" stroke-width="2" fill="none"/></g>
<g transform="translate(1151.2 481.0) rotate(25)"><ellipse rx="12.3" ry="18.2" fill="#734110"/><ellipse cx="-0.7" rx="11.4" ry="17.6" fill="#673708"/><path d="M-.3 -17.300Q.5 0 .3 17.500" stroke="#411800" stroke-width="2" fill="none"/></g>
<g transform="translate(1028.5 490.0) rotate(-3)"><ellipse rx="12.3" ry="18.2" fill="#734110"/><ellipse cx="-0.7" rx="11.4" ry="17.6" fill="#673708"/><path d="M-.3 -17.300Q.5 0 .3 17.500" stroke="#411800" stroke-width="2" fill="none"/></g>
<g transform="translate(1055.0 517.6) rotate(10)"><ellipse rx="12.3" ry="18.2" fill="#734110"/><ellipse cx="-0.7" rx="11.4" ry="17.6" fill="#673708"/><path d="M-.3 -17.300Q.5 0 .3 17.500" stroke="#411800" stroke-width="2" fill="none"/></g>
<g transform="translate(893.0 487.0) rotate(40)"><ellipse rx="12.3" ry="18.2" fill="#734110"/><ellipse cx="-0.7" rx="11.4" ry="17.6" fill="#673708"/><path d="M-.3 -17.300Q.5 0 .3 17.500" stroke="#411800" stroke-width="2" fill="none"/></g>
<g transform="translate(550.8 508.8) rotate(-15)"><ellipse rx="12.3" ry="18.2" fill="#734110"/><ellipse cx="-0.7" rx="11.4" ry="17.6" fill="#673708"/><path d="M-.3 -17.300Q.5 0 .3 17.500" stroke="#411800" stroke-width="2" fill="none"/></g>
<g transform="translate(448.6 526.5) rotate(-20)"><ellipse rx="12.3" ry="18.2" fill="#734110"/><ellipse cx="-0.7" rx="11.4" ry="17.6" fill="#673708"/><path d="M-.3 -17.300Q.5 0 .3 17.500" stroke="#411800" stroke-width="2" fill="none"/></g>
<g transform="translate(482.2 545.3) rotate(-2)"><ellipse rx="12.3" ry="18.2" fill="#734110"/><ellipse cx="-0.7" rx="11.4" ry="17.6" fill="#673708"/><path d="M-.3 -17.300Q.5 0 .3 17.500" stroke="#411800" stroke-width="2" fill="none"/></g>
<g transform="translate(707.5 494.4) rotate(-25)"><ellipse rx="12.3" ry="18.2" fill="#734110"/><ellipse cx="-0.7" rx="11.4" ry="17.6" fill="#673708"/><path d="M-.3 -17.300Q.5 0 .3 17.500" stroke="#411800" stroke-width="2" fill="none"/></g>
<g transform="translate(796.1 526.0) rotate(-40)"><ellipse rx="12.3" ry="18.2" fill="#734110"/><ellipse cx="-0.7" rx="11.4" ry="17.6" fill="#673708"/><path d="M-.3 -17.300Q.5 0 .3 17.500" stroke="#411800" stroke-width="2" fill="none"/></g>
<g transform="translate(833.3 535.8) rotate(-15)"><ellipse rx="12.3" ry="18.2" fill="#734110"/><ellipse cx="-0.7" rx="11.4" ry="17.6" fill="#673708"/><path d="M-.3 -17.300Q.5 0 .3 17.500" stroke="#411800" stroke-width="2" fill="none"/></g>
<g transform="translate(890.2 526.5) rotate(65)"><ellipse rx="12.3" ry="18.2" fill="#734110"/><ellipse cx="-0.7" rx="11.4" ry="17.6" fill="#673708"/><path d="M-.3 -17.300Q.5 0 .3 17.500" stroke="#411800" stroke-width="2" fill="none"/></g>
<g transform="translate(412.7 592.7) rotate(2)"><ellipse rx="12.3" ry="18.2" fill="#734110"/><ellipse cx="-0.7" rx="11.4" ry="17.6" fill="#673708"/><path d="M-.3 -17.300Q.5 0 .3 17.500" stroke="#411800" stroke-width="2" fill="none"/></g>
<g transform="translate(430.8 625.2) rotate(20)"><ellipse rx="12.3" ry="18.2" fill="#734110"/><ellipse cx="-0.7" rx="11.4" ry="17.6" fill="#673708"/><path d="M-.3 -17.300Q.5 0 .3 17.500" stroke="#411800" stroke-width="2" fill="none"/></g>
<g transform="translate(614.6 561.5) rotate(-15)"><ellipse rx="12.3" ry="18.2" fill="#734110"/><ellipse cx="-0.7" rx="11.4" ry="17.6" fill="#673708"/><path d="M-.3 -17.300Q.5 0 .3 17.500" stroke="#411800" stroke-width="2" fill="none"/></g>
<g transform="translate(645.6 583.5) rotate(0)"><ellipse rx="12.3" ry="18.2" fill="#734110"/><ellipse cx="-0.7" rx="11.4" ry="17.6" fill="#673708"/><path d="M-.3 -17.300Q.5 0 .3 17.500" stroke="#411800" stroke-width="2" fill="none"/></g>
<g transform="translate(748.9 574.9) rotate(-12)"><ellipse rx="12.3" ry="18.2" fill="#734110"/><ellipse cx="-0.7" rx="11.4" ry="17.6" fill="#673708"/><path d="M-.3 -17.300Q.5 0 .3 17.500" stroke="#411800" stroke-width="2" fill="none"/></g>
<g transform="translate(909.0 624.0) rotate(20)"><ellipse rx="12.3" ry="18.2" fill="#734110"/><ellipse cx="-0.7" rx="11.4" ry="17.6" fill="#673708"/><path d="M-.3 -17.300Q.5 0 .3 17.500" stroke="#411800" stroke-width="2" fill="none"/></g>
<g transform="translate(980.2 576.5) rotate(-3)"><ellipse rx="12.3" ry="18.2" fill="#734110"/><ellipse cx="-0.7" rx="11.4" ry="17.6" fill="#673708"/><path d="M-.3 -17.300Q.5 0 .3 17.500" stroke="#411800" stroke-width="2" fill="none"/></g>
<g transform="translate(1008.0 603.5) rotate(5)"><ellipse rx="12.3" ry="18.2" fill="#734110"/><ellipse cx="-0.7" rx="11.4" ry="17.6" fill="#673708"/><path d="M-.3 -17.300Q.5 0 .3 17.500" stroke="#411800" stroke-width="2" fill="none"/></g>
<g transform="translate(1136.5 568.0) rotate(3)"><ellipse rx="12.3" ry="18.2" fill="#734110"/><ellipse cx="-0.7" rx="11.4" ry="17.6" fill="#673708"/><path d="M-.3 -17.300Q.5 0 .3 17.500" stroke="#411800" stroke-width="2" fill="none"/></g>
<g transform="translate(1156.4 600.8) rotate(25)"><ellipse rx="12.3" ry="18.2" fill="#734110"/><ellipse cx="-0.7" rx="11.4" ry="17.6" fill="#673708"/><path d="M-.3 -17.300Q.5 0 .3 17.500" stroke="#411800" stroke-width="2" fill="none"/></g></g>
<g filter="url(#bl)"><g transform="translate(562.6 172.5) rotate(-57)"><ellipse rx="29.500" ry="44.500" fill="#5c3000"/><path d="M-2.500 -41.500Q3 0 2 42.500" stroke="#451d00" stroke-width="4.600" fill="none"/></g>
<g transform="translate(655.0 168.5) rotate(-36)"><ellipse rx="29.500" ry="44.500" fill="#5c3000"/><path d="M-2.500 -41.500Q3 0 2 42.500" stroke="#451d00" stroke-width="4.600" fill="none"/></g>
<g transform="translate(769.2 197.6) rotate(-31.5)"><ellipse rx="29.500" ry="44.500" fill="#5c3000"/><path d="M-2.500 -41.500Q3 0 2 42.500" stroke="#451d00" stroke-width="4.600" fill="none"/></g>
<g transform="translate(856.9 224.7) rotate(-12)"><ellipse rx="29.500" ry="44.500" fill="#5c3000"/><path d="M-2.500 -41.500Q3 0 2 42.500" stroke="#451d00" stroke-width="4.600" fill="none"/></g>
<g transform="translate(1007.4 278.4) rotate(-57)"><ellipse rx="29.500" ry="44.500" fill="#5c3000"/><path d="M-2.500 -41.500Q3 0 2 42.500" stroke="#451d00" stroke-width="4.600" fill="none"/></g>
<g transform="translate(1096.0 280.7) rotate(-32)"><ellipse rx="29.500" ry="44.500" fill="#5c3000"/><path d="M-2.500 -41.500Q3 0 2 42.500" stroke="#451d00" stroke-width="4.600" fill="none"/></g>
<g transform="translate(437.5 419.6) rotate(-8)"><ellipse rx="29.500" ry="44.500" fill="#5c3000"/><path d="M-2.500 -41.500Q3 0 2 42.500" stroke="#451d00" stroke-width="4.600" fill="none"/></g>
<g transform="translate(745.2 374.0) rotate(-61)"><ellipse rx="29.500" ry="44.500" fill="#5c3000"/><path d="M-2.500 -41.500Q3 0 2 42.500" stroke="#451d00" stroke-width="4.600" fill="none"/></g>
<g transform="translate(840.4 380.7) rotate(-31.5)"><ellipse rx="29.500" ry="44.500" fill="#5c3000"/><path d="M-2.500 -41.500Q3 0 2 42.500" stroke="#451d00" stroke-width="4.600" fill="none"/></g>
<g transform="translate(503.4 485.2) rotate(13)"><ellipse rx="29.500" ry="44.500" fill="#5c3000"/><path d="M-2.500 -41.500Q3 0 2 42.500" stroke="#451d00" stroke-width="4.600" fill="none"/></g>
<g transform="translate(677.4 461.0) rotate(37) scale(1.06)"><ellipse rx="29.500" ry="44.500" fill="#5c3000"/><path d="M-2.500 -41.500Q3 0 2 42.500" stroke="#451d00" stroke-width="4.600" fill="none"/></g>
<g transform="translate(961.9 454.9) rotate(-53)"><ellipse rx="29.500" ry="44.500" fill="#5c3000"/><path d="M-2.500 -41.500Q3 0 2 42.500" stroke="#451d00" stroke-width="4.600" fill="none"/></g>
<g transform="translate(1053.7 458.5) rotate(-28)"><ellipse rx="29.500" ry="44.500" fill="#5c3000"/><path d="M-2.500 -41.500Q3 0 2 42.500" stroke="#451d00" stroke-width="4.600" fill="none"/></g>
<g transform="translate(669.4 562.5) rotate(62)"><ellipse rx="29.500" ry="44.500" fill="#5c3000"/><path d="M-2.500 -41.500Q3 0 2 42.500" stroke="#451d00" stroke-width="4.600" fill="none"/></g>
<g transform="translate(478.4 632.0) rotate(-54)"><ellipse rx="29.500" ry="44.500" fill="#5c3000"/><path d="M-2.500 -41.500Q3 0 2 42.500" stroke="#451d00" stroke-width="4.600" fill="none"/></g>
<g transform="translate(571.4 634.2) rotate(-32)"><ellipse rx="29.500" ry="44.500" fill="#5c3000"/><path d="M-2.500 -41.500Q3 0 2 42.500" stroke="#451d00" stroke-width="4.600" fill="none"/></g>
<g transform="translate(795.5 645.8) rotate(-55)"><ellipse rx="29.500" ry="44.500" fill="#5c3000"/><path d="M-2.500 -41.500Q3 0 2 42.500" stroke="#451d00" stroke-width="4.600" fill="none"/></g>
<g transform="translate(890.2 646.3) rotate(-35)"><ellipse rx="29.500" ry="44.500" fill="#5c3000"/><path d="M-2.500 -41.500Q3 0 2 42.500" stroke="#451d00" stroke-width="4.600" fill="none"/></g>
<g transform="translate(1020.2 633.0) rotate(-55)"><ellipse rx="29.500" ry="44.500" fill="#5c3000"/><path d="M-2.500 -41.500Q3 0 2 42.500" stroke="#451d00" stroke-width="4.600" fill="none"/></g>
<g transform="translate(1115.4 634.2) rotate(-34.6)"><ellipse rx="29.500" ry="44.500" fill="#5c3000"/><path d="M-2.500 -41.500Q3 0 2 42.500" stroke="#451d00" stroke-width="4.600" fill="none"/></g></g>
<g><g transform="translate(1084.3 226.0) rotate(-5)"><ellipse rx="12.3" ry="18.2" fill="#734110"/><ellipse cx="-0.7" rx="11.4" ry="17.6" fill="#673708"/><path d="M-.3 -17.300Q.5 0 .3 17.500" stroke="#411800" stroke-width="2" fill="none"/></g>
<g transform="translate(539.3 588.4) rotate(2)"><ellipse rx="12.3" ry="18.2" fill="#734110"/><ellipse cx="-0.7" rx="11.4" ry="17.6" fill="#673708"/><path d="M-.3 -17.300Q.5 0 .3 17.500" stroke="#411800" stroke-width="2" fill="none"/></g>
<g transform="translate(779.9 596.4) rotate(2)"><ellipse rx="12.3" ry="18.2" fill="#734110"/><ellipse cx="-0.7" rx="11.4" ry="17.6" fill="#673708"/><path d="M-.3 -17.300Q.5 0 .3 17.500" stroke="#411800" stroke-width="2" fill="none"/></g>
<g transform="translate(886.2 594.6) rotate(2)"><ellipse rx="12.3" ry="18.2" fill="#734110"/><ellipse cx="-0.7" rx="11.4" ry="17.6" fill="#673708"/><path d="M-.3 -17.300Q.5 0 .3 17.500" stroke="#411800" stroke-width="2" fill="none"/></g></g>
</g>
</svg>
<div class="abs" style="left:35.500px;top:285.500px;width:148.500px;height:83.500px;background:#fff"></div>
<svg style="left:36px;top:286px;overflow:hidden" width="148" height="83" viewBox="379 245 814 458"><g>
<g><g transform="translate(491.0 154.0) rotate(10)"><ellipse rx="12.3" ry="18.2" fill="#734110"/><ellipse cx="-0.7" rx="11.4" ry="17.6" fill="#673708"/><path d="M-.3 -17.300Q.5 0 .3 17.500" stroke="#411800" stroke-width="2" fill="none"/></g>
<g transform="translate(428.2 212.0) rotate(-7)"><ellipse rx="12.3" ry="18.2" fill="#734110"/><ellipse cx="-0.7" rx="11.4" ry="17.6" fill="#673708"/><path d="M-.3 -17.300Q.5 0 .3 17.500" stroke="#411800" stroke-width="2" fill="none"/></g>
<g transform="translate(455.2 239.5) rotate(12)"><ellipse rx="12.3" ry="18.2" fill="#734110"/><ellipse cx="-0.7" rx="11.4" ry="17.6" fill="#673708"/><path d="M-.3 -17.300Q.5 0 .3 17.500" stroke="#411800" stroke-width="2" fill="none"/></g>
<g transform="translate(538.9 227.5) rotate(34)"><ellipse rx="12.3" ry="18.2" fill="#734110"/><ellipse cx="-0.7" rx="11.4" ry="17.6" fill="#673708"/><path d="M-.3 -17.300Q.5 0 .3 17.500" stroke="#411800" stroke-width="2" fill="none"/></g>
<g transform="translate(539.8 266.3) rotate(57)"><ellipse rx="12.3" ry="18.2" fill="#734110"/><ellipse cx="-0.7" rx="11.4" ry="17.6" fill="#673708"/><path d="M-.3 -17.300Q.5 0 .3 17.500" stroke="#411800" stroke-width="2" fill="none"/></g>
<g transform="translate(630.3 187.3) rotate(-8)"><ellipse rx="12.3" ry="18.2" fill="#734110"/><ellipse cx="-0.7" rx="11.4" ry="17.6" fill="#673708"/><path d="M-.3 -17.300Q.5 0 .3 17.500" stroke="#411800" stroke-width="2" fill="none"/></g>
<g transform="translate(658.8 214.4) rotate(12)"><ellipse rx="12.3" ry="18.2" fill="#734110"/><ellipse cx="-0.7" rx="11.4" ry="17.6" fill="#673708"/><path d="M-.3 -17.300Q.5 0 .3 17.500" stroke="#411800" stroke-width="2" fill="none"/></g>
<g transform="translate(796.1 234.2) rotate(-8)"><ellipse rx="12.3" ry="18.2" fill="#734110"/><ellipse cx="-0.7" rx="11.4" ry="17.6" fill="#673708"/><path d="M-.3 -17.300Q.5 0 .3 17.500" stroke="#411800" stroke-width="2" fill="none"/></g>
<g transform="translate(758.0 220.0) rotate(-35)"><ellipse rx="12.3" ry="18.2" fill="#734110"/><ellipse cx="-0.7" rx="11.4" ry="17.6" fill="#673708"/><path d="M-.3 -17.300Q.5 0 .3 17.500" stroke="#411800" stroke-width="2" fill="none"/></g>
<g transform="translate(823.8 163.5) rotate(35)"><ellipse rx="12.3" ry="18.2" fill="#734110"/><ellipse cx="-0.7" rx="11.4" ry="17.6" fill="#673708"/><path d="M-.3 -17.300Q.5 0 .3 17.500" stroke="#411800" stroke-width="2" fill="none"/></g>
<g transform="translate(872.0 169.0) rotate(-5)"><ellipse rx="12.3" ry="18.2" fill="#734110"/><ellipse cx="-0.7" rx="11.4" ry="17.6" fill="#673708"/><path d="M-.3 -17.300Q.5 0 .3 17.500" stroke="#411800" stroke-width="2" fill="none"/></g>
<g transform="translate(898.6 196.5) rotate(10)"><ellipse rx="12.3" ry="18.2" fill="#734110"/><ellipse cx="-0.7" rx="11.4" ry="17.6" fill="#673708"/><path d="M-.3 -17.300Q.5 0 .3 17.500" stroke="#411800" stroke-width="2" fill="none"/></g>
<g transform="translate(941.5 186.1) rotate(-7)"><ellipse rx="12.3" ry="18.2" fill="#734110"/><ellipse cx="-0.7" rx="11.4" ry="17.6" fill="#673708"/><path d="M-.3 -17.300Q.5 0 .3 17.500" stroke="#411800" stroke-width="2" fill="none"/></g>
<g transform="translate(968.3 213.1) rotate(10)"><ellipse rx="12.3" ry="18.2" fill="#734110"/><ellipse cx="-0.7" rx="11.4" ry="17.6" fill="#673708"/><path d="M-.3 -17.300Q.5 0 .3 17.500" stroke="#411800" stroke-width="2" fill="none"/></g>
<g transform="translate(991.0 153.7) rotate(80)"><ellipse rx="12.3" ry="18.2" fill="#734110"/><ellipse cx="-0.7" rx="11.4" ry="17.6" fill="#673708"/><path d="M-.3 -17.300Q.5 0 .3 17.500" stroke="#411800" stroke-width="2" fill="none"/></g>
<g transform="translate(1135.9 169.5) rotate(-7)"><ellipse rx="12.3" ry="18.2" fill="#734110"/><ellipse cx="-0.7" rx="11.4" ry="17.6" fill="#673708"/><path d="M-.3 -17.300Q.5 0 .3 17.500" stroke="#411800" stroke-width="2" fill="none"/></g>
<g transform="translate(1162.4 196.5) rotate(10)"><ellipse rx="12.3" ry="18.2" fill="#734110"/><ellipse cx="-0.7" rx="11.4" ry="17.6" fill="#673708"/><path d="M-.3 -17.300Q.5 0 .3 17.500" stroke="#411800" stroke-width="2" fill="none"/></g>
<g transform="translate(1112.2 253.5) rotate(10)"><ellipse rx="12.3" ry="18.2" fill="#734110"/><ellipse cx="-0.7" rx="11.4" ry="17.6" fill="#673708"/><path d="M-.3 -17.300Q.5 0 .3 17.500" stroke="#411800" stroke-width="2" fill="none"/></g>
<g transform="translate(474.0 326.6) rotate(-54) scale(1.215)"><ellipse rx="12.3" ry="18.2" fill="#734110"/><ellipse cx="-0.7" rx="11.4" ry="17.6" fill="#673708"/><path d="M-.3 -17.300Q.5 0 .3 17.500" stroke="#411800" stroke-width="2" fill="none"/></g>
<g transform="translate(519.8 328.3) rotate(-31) scale(1.215)"><ellipse rx="12.3" ry="18.2" fill="#734110"/><ellipse cx="-0.7" rx="11.4" ry="17.6" fill="#673708"/><path d="M-.3 -17.300Q.5 0 .3 17.500" stroke="#411800" stroke-width="2" fill="none"/></g>
<g transform="translate(610.0 314.2) rotate(-25)"><ellipse rx="12.3" ry="18.2" fill="#734110"/><ellipse cx="-0.7" rx="11.4" ry="17.6" fill="#673708"/><path d="M-.3 -17.300Q.5 0 .3 17.500" stroke="#411800" stroke-width="2" fill="none"/></g>
<g transform="translate(644.8 330.5) rotate(-6)"><ellipse rx="12.3" ry="18.2" fill="#734110"/><ellipse cx="-0.7" rx="11.4" ry="17.6" fill="#673708"/><path d="M-.3 -17.300Q.5 0 .3 17.500" stroke="#411800" stroke-width="2" fill="none"/></g>
<g transform="translate(733.5 293.2) rotate(-6)"><ellipse rx="12.3" ry="18.2" fill="#734110"/><ellipse cx="-0.7" rx="11.4" ry="17.6" fill="#673708"/><path d="M-.3 -17.300Q.5 0 .3 17.500" stroke="#411800" stroke-width="2" fill="none"/></g>
<g transform="translate(760.4 320.5) rotate(10)"><ellipse rx="12.3" ry="18.2" fill="#734110"/><ellipse cx="-0.7" rx="11.4" ry="17.6" fill="#673708"/><path d="M-.3 -17.300Q.5 0 .3 17.500" stroke="#411800" stroke-width="2" fill="none"/></g>
<g transform="translate(828.2 328.5) rotate(-5)"><ellipse rx="12.3" ry="18.2" fill="#734110"/><ellipse cx="-0.7" rx="11.4" ry="17.6" fill="#673708"/><path d="M-.3 -17.300Q.5 0 .3 17.500" stroke="#411800" stroke-width="2" fill="none"/></g>
<g transform="translate(886.2 289.5) rotate(-5)"><ellipse rx="12.3" ry="18.2" fill="#734110"/><ellipse cx="-0.7" rx="11.4" ry="17.6" fill="#673708"/><path d="M-.3 -17.300Q.5 0 .3 17.500" stroke="#411800" stroke-width="2" fill="none"/></g>
<g transform="translate(912.8 316.1) rotate(10)"><ellipse rx="12.3" ry="18.2" fill="#734110"/><ellipse cx="-0.7" rx="11.4" ry="17.6" fill="#673708"/><path d="M-.3 -17.300Q.5 0 .3 17.500" stroke="#411800" stroke-width="2" fill="none"/></g>
<g transform="translate(1052.8 313.7) rotate(-5)"><ellipse rx="12.3" ry="18.2" fill="#734110"/><ellipse cx="-0.7" rx="11.4" ry="17.6" fill="#673708"/><path d="M-.3 -17.300Q.5 0 .3 17.500" stroke="#411800" stroke-width="2" fill="none"/></g>
<g transform="translate(1082.7 342.1) rotate(10)"><ellipse rx="12.3" ry="18.2" fill="#734110"/><ellipse cx="-0.7" rx="11.4" ry="17.6" fill="#673708"/><path d="M-.3 -17.300Q.5 0 .3 17.500" stroke="#411800" stroke-width="2" fill="none"/></g>
<g transform="translate(1152.5 334.4) rotate(-20)"><ellipse rx="12.3" ry="18.2" fill="#734110"/><ellipse cx="-0.7" rx="11.4" ry="17.6" fill="#673708"/><path d="M-.3 -17.300Q.5 0 .3 17.500" stroke="#411800" stroke-width="2" fill="none"/></g>
<g transform="translate(1183.5 355.0) rotate(2)"><ellipse rx="12.3" ry="18.2" fill="#734110"/><ellipse cx="-0.7" rx="11.4" ry="17.6" fill="#673708"/><path d="M-.3 -17.300Q.5 0 .3 17.500" stroke="#411800" stroke-width="2" fill="none"/></g>
<g transform="translate(426.4 354.3) rotate(-5)"><ellipse rx="12.3" ry="18.2" fill="#734110"/><ellipse cx="-0.7" rx="11.4" ry="17.6" fill="#673708"/><path d="M-.3 -17.300Q.5 0 .3 17.500" stroke="#411800" stroke-width="2" fill="none"/></g>
<g transform="translate(453.2 381.2) rotate(12)"><ellipse rx="12.3" ry="18.2" fill="#734110"/><ellipse cx="-0.7" rx="11.4" ry="17.6" fill="#673708"/><path d="M-.3 -17.300Q.5 0 .3 17.500" stroke="#411800" stroke-width="2" fill="none"/></g>
<g transform="translate(437.0 462.5) rotate(45)"><ellipse rx="12.3" ry="18.2" fill="#734110"/><ellipse cx="-0.7" rx="11.4" ry="17.6" fill="#673708"/><path d="M-.3 -17.300Q.5 0 .3 17.500" stroke="#411800" stroke-width="2" fill="none"/></g>
<g transform="translate(497.2 419.2) rotate(20)"><ellipse rx="12.3" ry="18.2" fill="#734110"/><ellipse cx="-0.7" rx="11.4" ry="17.6" fill="#673708"/><path d="M-.3 -17.300Q.5 0 .3 17.500" stroke="#411800" stroke-width="2" fill="none"/></g>
<g transform="translate(583.8 376.5) rotate(-4)"><ellipse rx="12.3" ry="18.2" fill="#734110"/><ellipse cx="-0.7" rx="11.4" ry="17.6" fill="#673708"/><path d="M-.3 -17.300Q.5 0 .3 17.500" stroke="#411800" stroke-width="2" fill="none"/></g>
<g transform="translate(610.3 406.0) rotate(5)"><ellipse rx="12.3" ry="18.2" fill="#734110"/><ellipse cx="-0.7" rx="11.4" ry="17.6" fill="#673708"/><path d="M-.3 -17.300Q.5 0 .3 17.500" stroke="#411800" stroke-width="2" fill="none"/></g>
<g transform="translate(651.6 406.0) rotate(-3)"><ellipse rx="12.3" ry="18.2" fill="#734110"/><ellipse cx="-0.7" rx="11.4" ry="17.6" fill="#673708"/><path d="M-.3 -17.300Q.5 0 .3 17.500" stroke="#411800" stroke-width="2" fill="none"/></g>
<g transform="translate(677.6 424.0) rotate(10)"><ellipse rx="12.3" ry="18.2" fill="#734110"/><ellipse cx="-0.7" rx="11.4" ry="17.6" fill="#673708"/><path d="M-.3 -17.300Q.5 0 .3 17.500" stroke="#411800" stroke-width="2" fill="none"/></g>
<g transform="translate(777.3 417.4) rotate(12)"><ellipse rx="12.3" ry="18.2" fill="#734110"/><ellipse cx="-0.7" rx="11.4" ry="17.6" fill="#673708"/><path d="M-.3 -17.300Q.5 0 .3 17.500" stroke="#411800" stroke-width="2" fill="none"/></g>
<g transform="translate(856.5 355.0) rotate(8)"><ellipse rx="12.3" ry="18.2" fill="#734110"/><ellipse cx="-0.7" rx="11.4" ry="17.6" fill="#673708"/><path d="M-.3 -17.300Q.5 0 .3 17.500" stroke="#411800" stroke-width="2" fill="none"/></g>
<g transform="translate(909.0 420.7) rotate(-30)"><ellipse rx="12.3" ry="18.2" fill="#734110"/><ellipse cx="-0.7" rx="11.4" ry="17.6" fill="#673708"/><path d="M-.3 -17.300Q.5 0 .3 17.500" stroke="#411800" stroke-width="2" fill="none"/></g>
<g transform="translate(941.5 424.0) rotate(-10)"><ellipse rx="12.3" ry="18.2" fill="#734110"/><ellipse cx="-0.7" rx="11.4" ry="17.6" fill="#673708"/><path d="M-.3 -17.300Q.5 0 .3 17.500" stroke="#411800" stroke-width="2" fill="none"/></g>
<g transform="translate(996.4 376.5) rotate(10)"><ellipse rx="12.3" ry="18.2" fill="#734110"/><ellipse cx="-0.7" rx="11.4" ry="17.6" fill="#673708"/><path d="M-.3 -17.300Q.5 0 .3 17.500" stroke="#411800" stroke-width="2" fill="none"/></g>
<g transform="translate(1010.8 411.9) rotate(30)"><ellipse rx="12.3" ry="18.2" fill="#734110"/><ellipse cx="-0.7" rx="11.4" ry="17.6" fill="#673708"/><path d="M-.3 -17.300Q.5 0 .3 17.500" stroke="#411800" stroke-width="2" fill="none"/></g>
<g transform="translate(1132.5 449.5) rotate(5)"><ellipse rx="12.3" ry="18.2" fill="#734110"/><ellipse cx="-0.7" rx="11.4" ry="17.6" fill="#673708"/><path d="M-.3 -17.300Q.5 0 .3 17.500" stroke="#411800" stroke-width="2" fill="none"/></g>
<g transform="translate(1151.2 481.0) rotate(25)"><ellipse rx="12.3" ry="18.2" fill="#734110"/><ellipse cx="-0.7" rx="11.4" ry="17.6" fill="#673708"/><path d="M-.3 -17.300Q.5 0 .3 17.500" stroke="#411800" stroke-width="2" fill="none"/></g>
<g transform="translate(1028.5 490.0) rotate(-3)"><ellipse rx="12.3" ry="18.2" fill="#734110"/><ellipse cx="-0.7" rx="11.4" ry="17.6" fill="#673708"/><path d="M-.3 -17.300Q.5 0 .3 17.500" stroke="#411800" stroke-width="2" fill="none"/></g>
<g transform="translate(1055.0 517.6) rotate(10)"><ellipse rx="12.3" ry="18.2" fill="#734110"/><ellipse cx="-0.7" rx="11.4" ry="17.6" fill="#673708"/><path d="M-.3 -17.300Q.5 0 .3 17.500" stroke="#411800" stroke-width="2" fill="none"/></g>
<g transform="translate(893.0 487.0) rotate(40)"><ellipse rx="12.3" ry="18.2" fill="#734110"/><ellipse cx="-0.7" rx="11.4" ry="17.6" fill="#673708"/><path d="M-.3 -17.300Q.5 0 .3 17.500" stroke="#411800" stroke-width="2" fill="none"/></g>
<g transform="translate(550.8 508.8) rotate(-15)"><ellipse rx="12.3" ry="18.2" fill="#734110"/><ellipse cx="-0.7" rx="11.4" ry="17.6" fill="#673708"/><path d="M-.3 -17.300Q.5 0 .3 17.500" stroke="#411800" stroke-width="2" fill="none"/></g>
<g transform="translate(448.6 526.5) rotate(-20)"><ellipse rx="12.3" ry="18.2" fill="#734110"/><ellipse cx="-0.7" rx="11.4" ry="17.6" fill="#673708"/><path d="M-.3 -17.300Q.5 0 .3 17.500" stroke="#411800" stroke-width="2" fill="none"/></g>
<g transform="translate(482.2 545.3) rotate(-2)"><ellipse rx="12.3" ry="18.2" fill="#734110"/><ellipse cx="-0.7" rx="11.4" ry="17.6" fill="#673708"/><path d="M-.3 -17.300Q.5 0 .3 17.500" stroke="#411800" stroke-width="2" fill="none"/></g>
<g transform="translate(707.5 494.4) rotate(-25)"><ellipse rx="12.3" ry="18.2" fill="#734110"/><ellipse cx="-0.7" rx="11.4" ry="17.6" fill="#673708"/><path d="M-.3 -17.300Q.5 0 .3 17.500" stroke="#411800" stroke-width="2" fill="none"/></g>
<g transform="translate(796.1 526.0) rotate(-40)"><ellipse rx="12.3" ry="18.2" fill="#734110"/><ellipse cx="-0.7" rx="11.4" ry="17.6" fill="#673708"/><path d="M-.3 -17.300Q.5 0 .3 17.500" stroke="#411800" stroke-width="2" fill="none"/></g>
<g transform="translate(833.3 535.8) rotate(-15)"><ellipse rx="12.3" ry="18.2" fill="#734110"/><ellipse cx="-0.7" rx="11.4" ry="17.6" fill="#673708"/><path d="M-.3 -17.300Q.5 0 .3 17.500" stroke="#411800" stroke-width="2" fill="none"/></g>
<g transform="translate(890.2 526.5) rotate(65)"><ellipse rx="12.3" ry="18.2" fill="#734110"/><ellipse cx="-0.7" rx="11.4" ry="17.6" fill="#673708"/><path d="M-.3 -17.300Q.5 0 .3 17.500" stroke="#411800" stroke-width="2" fill="none"/></g>
<g transform="translate(412.7 592.7) rotate(2)"><ellipse rx="12.3" ry="18.2" fill="#734110"/><ellipse cx="-0.7" rx="11.4" ry="17.6" fill="#673708"/><path d="M-.3 -17.300Q.5 0 .3 17.500" stroke="#411800" stroke-width="2" fill="none"/></g>
<g transform="translate(430.8 625.2) rotate(20)"><ellipse rx="12.3" ry="18.2" fill="#734110"/><ellipse cx="-0.7" rx="11.4" ry="17.6" fill="#673708"/><path d="M-.3 -17.300Q.5 0 .3 17.500" stroke="#411800" stroke-width="2" fill="none"/></g>
<g transform="translate(614.6 561.5) rotate(-15)"><ellipse rx="12.3" ry="18.2" fill="#734110"/><ellipse cx="-0.7" rx="11.4" ry="17.6" fill="#673708"/><path d="M-.3 -17.300Q.5 0 .3 17.500" stroke="#411800" stroke-width="2" fill="none"/></g>
<g transform="translate(645.6 583.5) rotate(0)"><ellipse rx="12.3" ry="18.2" fill="#734110"/><ellipse cx="-0.7" rx="11.4" ry="17.6" fill="#673708"/><path d="M-.3 -17.300Q.5 0 .3 17.500" stroke="#411800" stroke-width="2" fill="none"/></g>
<g transform="translate(748.9 574.9) rotate(-12)"><ellipse rx="12.3" ry="18.2" fill="#734110"/><ellipse cx="-0.7" rx="11.4" ry="17.6" fill="#673708"/><path d="M-.3 -17.300Q.5 0 .3 17.500" stroke="#411800" stroke-width="2" fill="none"/></g>
<g transform="translate(909.0 624.0) rotate(20)"><ellipse rx="12.3" ry="18.2" fill="#734110"/><ellipse cx="-0.7" rx="11.4" ry="17.6" fill="#673708"/><path d="M-.3 -17.300Q.5 0 .3 17.500" stroke="#411800" stroke-width="2" fill="none"/></g>
<g transform="translate(980.2 576.5) rotate(-3)"><ellipse rx="12.3" ry="18.2" fill="#734110"/><ellipse cx="-0.7" rx="11.4" ry="17.6" fill="#673708"/><path d="M-.3 -17.300Q.5 0 .3 17.500" stroke="#411800" stroke-width="2" fill="none"/></g>
<g transform="translate(1008.0 603.5) rotate(5)"><ellipse rx="12.3" ry="18.2" fill="#734110"/><ellipse cx="-0.7" rx="11.4" ry="17.6" fill="#673708"/><path d="M-.3 -17.300Q.5 0 .3 17.500" stroke="#411800" stroke-width="2" fill="none"/></g>
<g transform="translate(1136.5 568.0) rotate(3)"><ellipse rx="12.3" ry="18.2" fill="#734110"/><ellipse cx="-0.7" rx="11.4" ry="17.6" fill="#673708"/><path d="M-.3 -17.300Q.5 0 .3 17.500" stroke="#411800" stroke-width="2" fill="none"/></g>
<g transform="translate(1156.4 600.8) rotate(25)"><ellipse rx="12.3" ry="18.2" fill="#734110"/><ellipse cx="-0.7" rx="11.4" ry="17.6" fill="#673708"/><path d="M-.3 -17.300Q.5 0 .3 17.500" stroke="#411800" stroke-width="2" fill="none"/></g></g>
<g filter="url(#bl)"><g transform="translate(562.6 172.5) rotate(-57)"><ellipse rx="29.500" ry="44.500" fill="#5c3000"/><path d="M-2.500 -41.500Q3 0 2 42.500" stroke="#451d00" stroke-width="4.600" fill="none"/></g>
<g transform="translate(655.0 168.5) rotate(-36)"><ellipse rx="29.500" ry="44.500" fill="#5c3000"/><path d="M-2.500 -41.500Q3 0 2 42.500" stroke="#451d00" stroke-width="4.600" fill="none"/></g>
<g transform="translate(769.2 197.6) rotate(-31.5)"><ellipse rx="29.500" ry="44.500" fill="#5c3000"/><path d="M-2.500 -41.500Q3 0 2 42.500" stroke="#451d00" stroke-width="4.600" fill="none"/></g>
<g transform="translate(856.9 224.7) rotate(-12)"><ellipse rx="29.500" ry="44.500" fill="#5c3000"/><path d="M-2.500 -41.500Q3 0 2 42.500" stroke="#451d00" stroke-width="4.600" fill="none"/></g>
<g transform="translate(1007.4 278.4) rotate(-57)"><ellipse rx="29.500" ry="44.500" fill="#5c3000"/><path d="M-2.500 -41.500Q3 0 2 42.500" stroke="#451d00" stroke-width="4.600" fill="none"/></g>
<g transform="translate(1096.0 280.7) rotate(-32)"><ellipse rx="29.500" ry="44.500" fill="#5c3000"/><path d="M-2.500 -41.500Q3 0 2 42.500" stroke="#451d00" stroke-width="4.600" fill="none"/></g>
<g transform="translate(437.5 419.6) rotate(-8)"><ellipse rx="29.500" ry="44.500" fill="#5c3000"/><path d="M-2.500 -41.500Q3 0 2 42.500" stroke="#451d00" stroke-width="4.600" fill="none"/></g>
<g transform="translate(745.2 374.0) rotate(-61)"><ellipse rx="29.500" ry="44.500" fill="#5c3000"/><path d="M-2.500 -41.500Q3 0 2 42.500" stroke="#451d00" stroke-width="4.600" fill="none"/></g>
<g transform="translate(840.4 380.7) rotate(-31.5)"><ellipse rx="29.500" ry="44.500" fill="#5c3000"/><path d="M-2.500 -41.500Q3 0 2 42.500" stroke="#451d00" stroke-width="4.600" fill="none"/></g>
<g transform="translate(503.4 485.2) rotate(13)"><ellipse rx="29.500" ry="44.500" fill="#5c3000"/><path d="M-2.500 -41.500Q3 0 2 42.500" stroke="#451d00" stroke-width="4.600" fill="none"/></g>
<g transform="translate(677.4 461.0) rotate(37) scale(1.06)"><ellipse rx="29.500" ry="44.500" fill="#5c3000"/><path d="M-2.500 -41.500Q3 0 2 42.500" stroke="#451d00" stroke-width="4.600" fill="none"/></g>
<g transform="translate(961.9 454.9) rotate(-53)"><ellipse rx="29.500" ry="44.500" fill="#5c3000"/><path d="M-2.500 -41.500Q3 0 2 42.500" stroke="#451d00" stroke-width="4.600" fill="none"/></g>
<g transform="translate(1053.7 458.5) rotate(-28)"><ellipse rx="29.500" ry="44.500" fill="#5c3000"/><path d="M-2.500 -41.500Q3 0 2 42.500" stroke="#451d00" stroke-width="4.600" fill="none"/></g>
<g transform="translate(669.4 562.5) rotate(62)"><ellipse rx="29.500" ry="44.500" fill="#5c3000"/><path d="M-2.500 -41.500Q3 0 2 42.500" stroke="#451d00" stroke-width="4.600" fill="none"/></g>
<g transform="translate(478.4 632.0) rotate(-54)"><ellipse rx="29.500" ry="44.500" fill="#5c3000"/><path d="M-2.500 -41.500Q3 0 2 42.500" stroke="#451d00" stroke-width="4.600" fill="none"/></g>
<g transform="translate(571.4 634.2) rotate(-32)"><ellipse rx="29.500" ry="44.500" fill="#5c3000"/><path d="M-2.500 -41.500Q3 0 2 42.500" stroke="#451d00" stroke-width="4.600" fill="none"/></g>
<g transform="translate(795.5 645.8) rotate(-55)"><ellipse rx="29.500" ry="44.500" fill="#5c3000"/><path d="M-2.500 -41.500Q3 0 2 42.500" stroke="#451d00" stroke-width="4.600" fill="none"/></g>
<g transform="translate(890.2 646.3) rotate(-35)"><ellipse rx="29.500" ry="44.500" fill="#5c3000"/><path d="M-2.500 -41.500Q3 0 2 42.500" stroke="#451d00" stroke-width="4.600" fill="none"/></g>
<g transform="translate(1020.2 633.0) rotate(-55)"><ellipse rx="29.500" ry="44.500" fill="#5c3000"/><path d="M-2.500 -41.500Q3 0 2 42.500" stroke="#451d00" stroke-width="4.600" fill="none"/></g>
<g transform="translate(1115.4 634.2) rotate(-34.6)"><ellipse rx="29.500" ry="44.500" fill="#5c3000"/><path d="M-2.500 -41.500Q3 0 2 42.500" stroke="#451d00" stroke-width="4.600" fill="none"/></g></g>
<g><g transform="translate(1084.3 226.0) rotate(-5)"><ellipse rx="12.3" ry="18.2" fill="#734110"/><ellipse cx="-0.7" rx="11.4" ry="17.6" fill="#673708"/><path d="M-.3 -17.300Q.5 0 .3 17.500" stroke="#411800" stroke-width="2" fill="none"/></g>
<g transform="translate(539.3 588.4) rotate(2)"><ellipse rx="12.3" ry="18.2" fill="#734110"/><ellipse cx="-0.7" rx="11.4" ry="17.6" fill="#673708"/><path d="M-.3 -17.300Q.5 0 .3 17.500" stroke="#411800" stroke-width="2" fill="none"/></g>
<g transform="translate(779.9 596.4) rotate(2)"><ellipse rx="12.3" ry="18.2" fill="#734110"/><ellipse cx="-0.7" rx="11.4" ry="17.6" fill="#673708"/><path d="M-.3 -17.300Q.5 0 .3 17.500" stroke="#411800" stroke-width="2" fill="none"/></g>
<g transform="translate(886.2 594.6) rotate(2)"><ellipse rx="12.3" ry="18.2" fill="#734110"/><ellipse cx="-0.7" rx="11.4" ry="17.6" fill="#673708"/><path d="M-.3 -17.300Q.5 0 .3 17.500" stroke="#411800" stroke-width="2" fill="none"/></g></g>
</g>
</svg>
<span class="t" style="left:63.95px;top:209px;line-height:10px;font-size:9.5px;letter-spacing:0.297px;color:#141414;font-weight:bold;font-family:'Liberation Serif',serif;-webkit-text-stroke:.25px #141414;">КАК</span>
<span class="t" style="left:88.02px;top:209px;line-height:10px;font-size:9.5px;letter-spacing:-0.130px;color:#141414;font-weight:bold;font-family:'Liberation Serif',serif;-webkit-text-stroke:.25px #141414;">КОФЕ</span>
<span class="t" style="left:119.44px;top:209px;line-height:10px;font-size:9.5px;letter-spacing:-0.295px;color:#141414;font-weight:bold;font-family:'Liberation Serif',serif;-webkit-text-stroke:.25px #141414;">ВЛИЯЕТ</span>
<span class="t" style="left:54.11px;top:219px;line-height:10px;font-size:9.5px;letter-spacing:0.114px;color:#141414;font-weight:bold;font-family:'Liberation Serif',serif;-webkit-text-stroke:.25px #141414;">НА</span>
<span class="t" style="left:71.22px;top:219px;line-height:10px;font-size:9.5px;letter-spacing:0.216px;color:#141414;font-weight:bold;font-family:'Liberation Serif',serif;-webkit-text-stroke:.25px #141414;">РАБОТУ</span>
<span class="t" style="left:113.27px;top:219px;line-height:10px;font-size:9.5px;letter-spacing:0.279px;color:#141414;font-weight:bold;font-family:'Liberation Serif',serif;-webkit-text-stroke:.25px #141414;">КОМАНДЫ</span>
<span class="t" style="left:52.20px;top:315px;line-height:10px;font-size:9.5px;letter-spacing:0.000px;color:#141414;font-weight:bold;font-family:'Liberation Serif',serif;-webkit-text-stroke:.25px #141414;">5</span>
<span class="t" style="left:59.40px;top:315px;line-height:10px;font-size:9.5px;letter-spacing:-0.223px;color:#141414;font-weight:bold;font-family:'Liberation Serif',serif;-webkit-text-stroke:.25px #141414;">ПРИЧИН</span>
<span class="t" style="left:103.60px;top:315px;line-height:10px;font-size:9.5px;letter-spacing:0.168px;color:#141414;font-weight:bold;font-family:'Liberation Serif',serif;-webkit-text-stroke:.25px #141414;">АРЕНДОВАТЬ</span>
<span class="t" style="left:72.50px;top:325px;line-height:10px;font-size:9.5px;letter-spacing:0.013px;color:#141414;font-weight:bold;font-family:'Liberation Serif',serif;-webkit-text-stroke:.25px #141414;">КОФЕМАШИНУ</span>
<!-- status -->
<div id="status"></div>
<div id="botstrip"></div>
<div class="abs" style="left:441px;top:766px;width:48px;height:2px;background:#4a4a4a"></div>
<span class="t" style="left:8.50px;top:749px;line-height:14px;font-size:12px;letter-spacing:-0.666px;">Слайд 1 из 2</span>
<span class="t" style="left:123.70px;top:749px;line-height:14px;font-size:12px;letter-spacing:-0.344px;">русский</span>
<span class="t" style="left:830.00px;top:750px;line-height:14px;font-size:12px;letter-spacing:-0.446px;">Заметки</span>
<span class="t" style="left:912.00px;top:750px;line-height:14px;font-size:12px;letter-spacing:-0.213px;">Примечания</span>
<span class="t" style="left:1304.40px;top:749px;line-height:14px;font-size:12px;letter-spacing:-1.325px;">64 %</span>
<div class="abs" style="left:999px;top:746px;width:40px;height:20px;background:#666564"></div>
<svg style="left:0;top:0" width="1" height="1"><path d="M98.600 752c-1.400-1-3.400-1.200-5.800-1.200v10.400h4 M98.600 752c1.400-1 3.400-1.200 5.800-1.200v7 M98.600 752v6.600 M97.800 759.600l2.600 2.600l4.400-4.600" stroke="#fff" stroke-width="1.100" fill="none"/><path d="M817.800 752l2.800-2.800l2.800 2.800 M812.200 756h15.600 M812.200 759.800h15.600 M812.200 763.500h15.600" stroke="#fff" stroke-width="1.100" fill="none"/><path d="M894.600 750h12.800v8.600h-8.400l-2.800 3v-3h-1.600z" stroke="#fff" stroke-width="1.100" fill="none" stroke-linejoin="round"/><path d="M1012.600 750.600h13v10.800h-13z M1015.400 750.600v10.800 M1015.400 758.400h10.200 M1018.600 753.400h4.400v2h-4.400z" stroke="#fff" stroke-width="1.100" fill="none"/><path d="M1052.400 750.600h5v4h-5z M1060.600 750.600h5v4h-5z M1052.400 757.600h5v4h-5z M1060.600 757.600h5v4h-5z" stroke="#fff" stroke-width="1.100" fill="none"/><path d="M1098.400 751.200c-1.600-1.200-3.800-1.600-6-1.600v10.600c2.200 0 4.400.4 6 1.400c1.600-1 3.800-1.400 6-1.400v-10.600c-2.200 0-4.400.4-6 1.600z M1098.400 751.200v10.400" stroke="#fff" stroke-width="1.100" fill="none"/><path d="M1093.800 752.600h3 M1093.800 754.800h3 M1093.800 757h3 M1100 752.600h3 M1100 754.800h3 M1100 757h3" stroke="#fff" stroke-width=".800" fill="none"/><path d="M1132.400 749.600h12.600 M1133.600 749.600v7h10.200v-7 M1138.700 756.600v4.800 M1135.400 761.500h6.600 M1136.800 752.600h3.800" stroke="#fff" stroke-width="1.100" fill="none"/><path d="M1165.400 755.800h7.200 M1178 756.400h100 M1283.200 756.400h7.400 M1286.900 752.400v7.800 M1228.500 753.800v5.400" stroke="#fff" stroke-width="1" fill="none"/><rect x="1206.800" y="751" width="5.200" height="11.200" fill="#fff"/><path d="M1350.400 752.400h6.400v6.400h-6.400z M1351.400 750.400l2.200-2.200l2.200 2.200 M1351.400 760.800l2.200 2.200l2.200-2.200 M1348.400 753.400l-2.200 2.200l2.200 2.200 M1358.800 753.400l2.200 2.200l-2.200 2.200" stroke="#fff" stroke-width="1.100" fill="none"/><rect x="1350.400" y="164" width="14.400" height="522" fill="#363636"/><rect x="1350.800" y="164" width="13.600" height="13" fill="#555"/><path d="M1353.800 172l3.700-4.200l3.700 4.200z" fill="#c0c0c0"/><rect x="1350.800" y="355.500" width="13.600" height="121" fill="#8a8a8a"/><rect x="1350.800" y="671" width="13.600" height="14.400" fill="#555"/><path d="M1353.800 676.400l3.700 4.200l3.700-4.200z" fill="#c0c0c0"/><path d="M1354.200 694.200l3.300-3.400l3.300 3.400z M1354.200 699l3.300-3.400l3.300 3.400z M1354.200 709.600l3.300 3.400l3.300-3.400z M1354.200 714.400l3.300 3.400l3.300-3.400z" fill="#d0d0d0"/></svg>
</div>
</body>
</html>
